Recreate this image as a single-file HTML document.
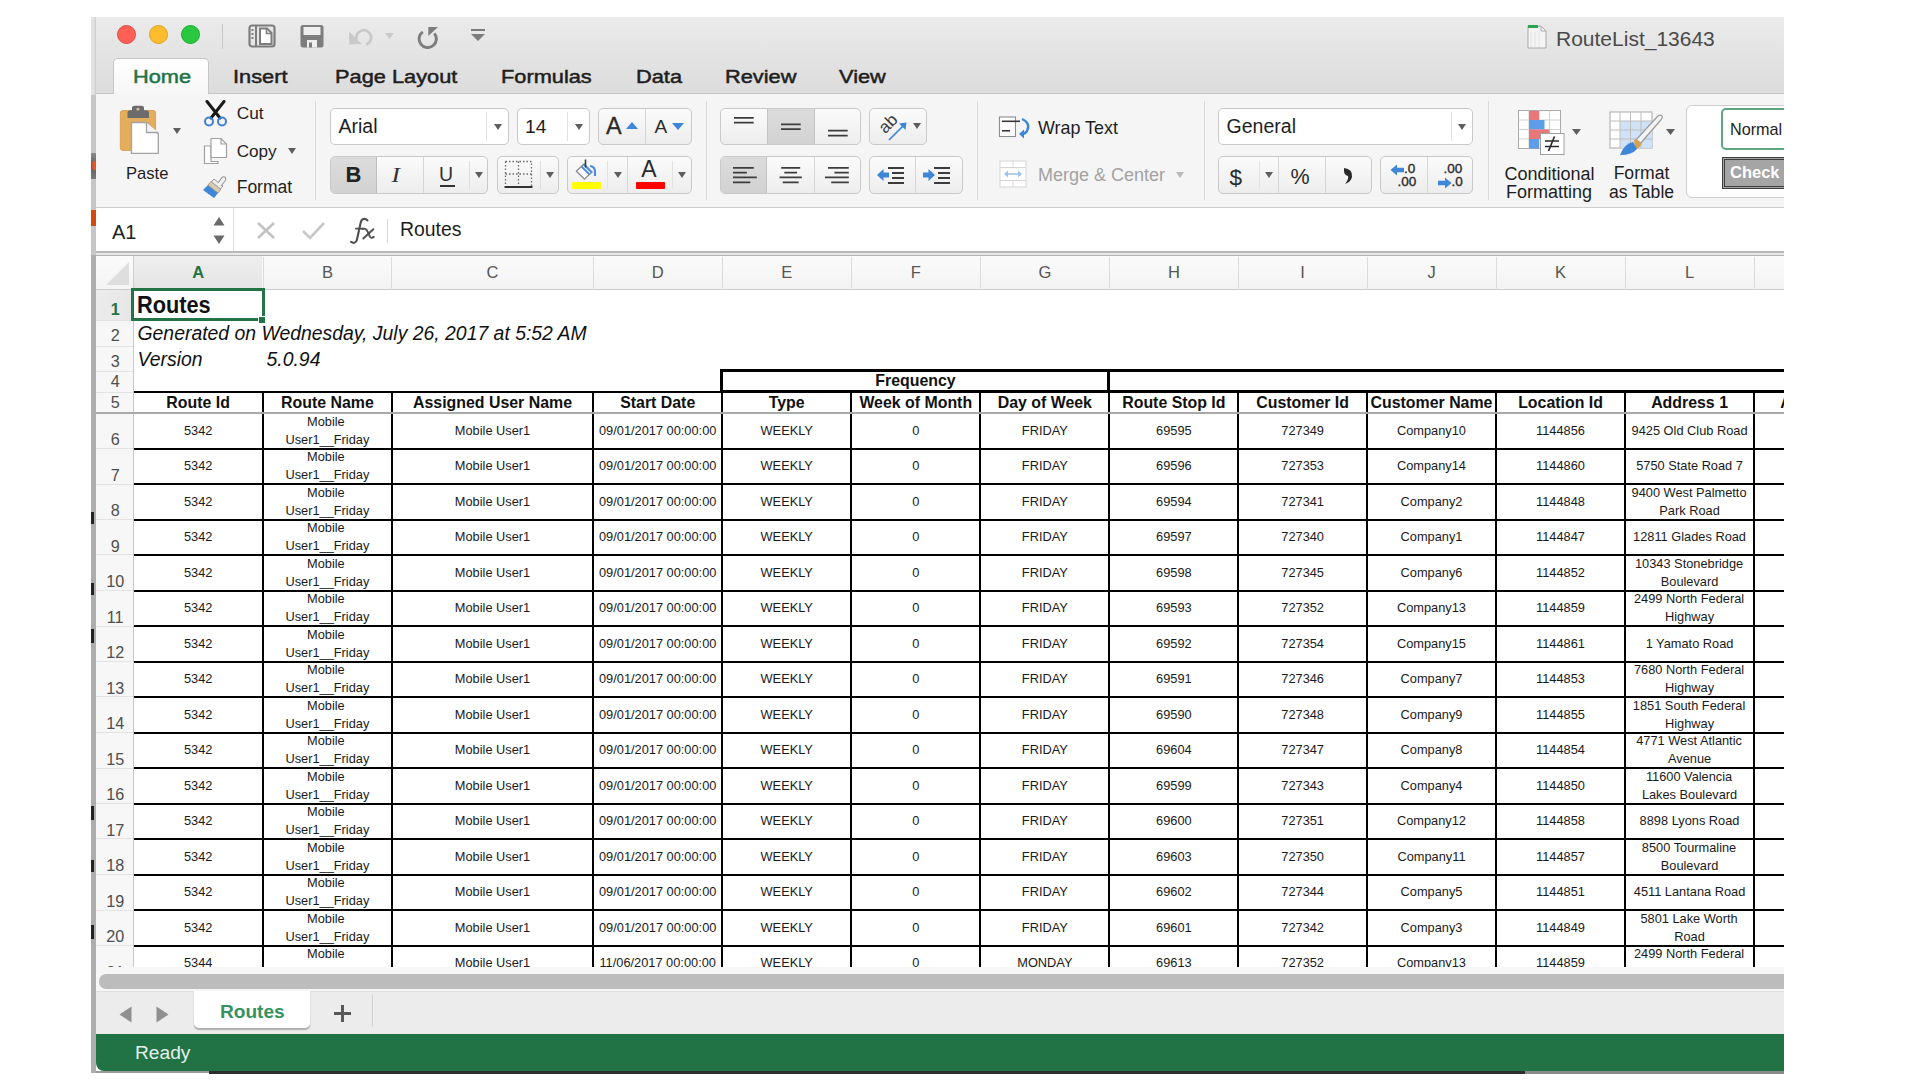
<!DOCTYPE html>
<html><head><meta charset="utf-8"><style>
*{margin:0;padding:0;box-sizing:border-box}
html,body{width:1920px;height:1080px;overflow:hidden;background:#fff;font-family:"Liberation Sans",sans-serif;position:relative}
.grp{position:absolute;border:1px solid #c9c9c9;border-radius:5px;background:linear-gradient(#fbfbfb,#ededed)}
.inp{position:absolute;border:1px solid #c9c9c9;border-radius:5px;background:#fff}
.vd{position:absolute;width:1px;background:#d4d4d4}
</style></head><body>

<div style="position:absolute;left:91px;top:17px;width:5px;height:1056px;background:#adadad"></div>
<div style="position:absolute;left:91px;top:17px;width:5px;height:78px;background:linear-gradient(90deg,#e2e2e2 60%,#c9c9c9)"></div>
<div style="position:absolute;left:91px;top:95px;width:5px;height:160px;background:#c6c6c6"></div>
<div style="position:absolute;left:91px;top:153px;width:5px;height:26px;background:linear-gradient(#8a8a8a,#5e5e5e 50%,#7a7a7a)"></div>
<div style="position:absolute;left:92px;top:161px;width:4px;height:9px;background:#e0572a;border-radius:50% 0 0 50%"></div>
<div style="position:absolute;left:91px;top:210px;width:5px;height:16px;background:#d24a12"></div>
<div style="position:absolute;left:91px;top:512px;width:3px;height:12px;background:#222"></div>
<div style="position:absolute;left:91px;top:583px;width:3px;height:12px;background:#222"></div>
<div style="position:absolute;left:91px;top:629px;width:3px;height:14px;background:#222"></div>
<div style="position:absolute;left:91px;top:806px;width:3px;height:14px;background:#222"></div>
<div style="position:absolute;left:91px;top:860px;width:3px;height:12px;background:#222"></div>
<div style="position:absolute;left:91px;top:925px;width:3px;height:14px;background:#222"></div>
<div style="position:absolute;left:96px;top:17px;width:1688px;height:77px;background:linear-gradient(#ebebeb,#e4e4e4 45%,#dcdcdc)"></div>
<div style="position:absolute;left:96px;top:93px;width:1688px;height:1px;background:#c4c4c4"></div>
<div style="position:absolute;left:116.9px;top:25px;width:19px;height:19px;border-radius:50%;background:#fe5f57;border:0.5px solid #e2463f"></div>
<div style="position:absolute;left:149.0px;top:25px;width:19px;height:19px;border-radius:50%;background:#febc2e;border:0.5px solid #e1a116"></div>
<div style="position:absolute;left:181.3px;top:25px;width:19px;height:19px;border-radius:50%;background:#28c840;border:0.5px solid #1aab29"></div>
<div style="position:absolute;left:222px;top:24px;width:1px;height:25px;background:#c8c8c8"></div>
<svg style="position:absolute;left:248px;top:24px;" width="28" height="24" viewBox="0 0 28 24"><rect x="1.5" y="1.5" width="25" height="21" rx="2.5" fill="none" stroke="#7d7d7d" stroke-width="2.2"/><rect x="7" y="1.5" width="2" height="21" fill="#7d7d7d"/><rect x="3.5" y="5" width="2" height="2" fill="#7d7d7d"/><rect x="3.5" y="9" width="2" height="2" fill="#7d7d7d"/><rect x="3.5" y="13" width="2" height="2" fill="#7d7d7d"/><path d="M12 4.5H19L23.5 9V20H12Z" fill="#fff" stroke="#7d7d7d" stroke-width="2"/><path d="M18.5 4.5V9.5H23.5" fill="none" stroke="#7d7d7d" stroke-width="1.6"/></svg>
<svg style="position:absolute;left:300px;top:24px;" width="24" height="24" viewBox="0 0 24 24"><rect x="0.5" y="1" width="23" height="22.5" rx="2.5" fill="#7d7d7d"/><rect x="3.5" y="3" width="17" height="8" fill="#efefef"/><rect x="7" y="16" width="10" height="7.5" fill="#efefef"/><rect x="9" y="18.5" width="3" height="5" fill="#7d7d7d"/></svg>
<svg style="position:absolute;left:348px;top:27px;" width="27" height="20" viewBox="0 0 27 20"><path d="M8.5 12.3 A7.4 7.4 0 1 1 18.2 17.6" fill="none" stroke="#c9c9c9" stroke-width="2.8"/><path d="M1.2 4.5 L1.2 17.6 L13.8 17 Z" fill="#c9c9c9"/></svg>
<svg style="position:absolute;left:385px;top:33px;" width="9" height="6" viewBox="0 0 9 6"><path d="M0 0H9L4.5 6Z" fill="#c9c9c9"/></svg>
<svg style="position:absolute;left:416px;top:25px;" width="24" height="24" viewBox="0 0 24 24"><path d="M6.8 6.9 A8.6 8.6 0 1 0 18.3 8.4" fill="none" stroke="#7d7d7d" stroke-width="2.9"/><path d="M12.3 1.9 H22 L12.3 11 Z" fill="#7d7d7d"/></svg>
<svg style="position:absolute;left:470px;top:28px;" width="16" height="14" viewBox="0 0 16 14"><rect x="1" y="1" width="14" height="2" fill="#7d7d7d"/><path d="M1 6H15L8 13Z" fill="#7d7d7d"/></svg>
<svg style="position:absolute;left:1526px;top:23px;" width="22" height="27" viewBox="0 0 22 27"><path d="M2 3H15L20 8V25H2Z" fill="#f4f4f4" stroke="#a9a9a9" stroke-width="1"/><path d="M15 3V8H20" fill="none" stroke="#a9a9a9"/><rect x="2" y="2" width="10" height="3" fill="#2ea44f"/><path d="M5 9V24M9 9V24M13 9V24" stroke="#e2e2e2" stroke-width="1"/></svg>
<div style="position:absolute;left:1556px;top:27.29px;font-size:21px;line-height:23.457px;color:#4a4a4a;font-weight:normal;white-space:nowrap;">RouteList_13643</div>
<div style="position:absolute;left:113px;top:58px;width:96px;height:37px;background:linear-gradient(#ffffff,#f6f6f6);border:1px solid #c6c6c6;border-bottom:none;border-radius:5px 5px 0 0"></div>
<div style="position:absolute;left:132.5px;top:65.72px;font-size:19.2px;line-height:21.446px;color:#217346;font-weight:normal;white-space:nowrap;-webkit-text-stroke:0.5px #217346;transform:scaleX(1.135);transform-origin:0 0">Home</div>
<div style="position:absolute;left:233px;top:65.72px;font-size:19.2px;line-height:21.446px;color:#1e1e1e;font-weight:normal;white-space:nowrap;-webkit-text-stroke:0.5px #1e1e1e;transform:scaleX(1.135);transform-origin:0 0">Insert</div>
<div style="position:absolute;left:335px;top:65.72px;font-size:19.2px;line-height:21.446px;color:#1e1e1e;font-weight:normal;white-space:nowrap;-webkit-text-stroke:0.5px #1e1e1e;transform:scaleX(1.135);transform-origin:0 0">Page Layout</div>
<div style="position:absolute;left:501px;top:65.72px;font-size:19.2px;line-height:21.446px;color:#1e1e1e;font-weight:normal;white-space:nowrap;-webkit-text-stroke:0.5px #1e1e1e;transform:scaleX(1.135);transform-origin:0 0">Formulas</div>
<div style="position:absolute;left:636px;top:65.72px;font-size:19.2px;line-height:21.446px;color:#1e1e1e;font-weight:normal;white-space:nowrap;-webkit-text-stroke:0.5px #1e1e1e;transform:scaleX(1.135);transform-origin:0 0">Data</div>
<div style="position:absolute;left:725px;top:65.72px;font-size:19.2px;line-height:21.446px;color:#1e1e1e;font-weight:normal;white-space:nowrap;-webkit-text-stroke:0.5px #1e1e1e;transform:scaleX(1.135);transform-origin:0 0">Review</div>
<div style="position:absolute;left:839px;top:65.72px;font-size:19.2px;line-height:21.446px;color:#1e1e1e;font-weight:normal;white-space:nowrap;-webkit-text-stroke:0.5px #1e1e1e;transform:scaleX(1.135);transform-origin:0 0">View</div>
<div style="position:absolute;left:96px;top:94px;width:1688px;height:114px;background:#f5f5f5"></div>
<div style="position:absolute;left:114px;top:93px;width:94px;height:2px;background:#f7f7f7"></div>
<div style="position:absolute;left:96px;top:207px;width:1688px;height:1px;background:#cdcdcd"></div>
<svg style="position:absolute;left:118px;top:104px;" width="42" height="52" viewBox="0 0 42 52"><rect x="2.3" y="6.5" width="35.3" height="40" rx="2.5" fill="#e4ad5c"/><rect x="2.3" y="6.5" width="35.3" height="40" rx="2.5" fill="none" stroke="#d39b48" stroke-width="0.8"/><path d="M9.5 14 V9 Q9.5 6.3 12.5 6.3 H14 V4 Q14 1.8 17 1.8 H23 Q26 1.8 26 4 V6.3 H28 Q31 6.3 31 9 V14 Z" fill="#6b6b6b"/><rect x="18.5" y="4" width="3" height="2.5" fill="#c9b89a"/><path d="M13.5 18.5 H28.5 L40.3 30 V49.3 H13.5 Z" fill="#fff" stroke="#a3a3a3" stroke-width="1.3"/><path d="M28.5 18.5 V28.5 H40.3" fill="#f4f4f4" stroke="#a3a3a3" stroke-width="1.3"/></svg>
<svg style="position:absolute;left:173px;top:128px;" width="8" height="6" viewBox="0 0 8 6"><path d="M0 0H8L4.0 6Z" fill="#5e5e5e"/></svg>
<div style="position:absolute;left:126px;top:165.18px;font-size:16.6px;line-height:18.542px;color:#1e1e1e;font-weight:normal;white-space:nowrap;">Paste</div>
<svg style="position:absolute;left:202px;top:100px;" width="27" height="28" viewBox="0 0 27 28"><path d="M5 1.5 L18 18 M22 1.5 L9 18" stroke="#1a1a1a" stroke-width="3" stroke-linecap="round"/><circle cx="7" cy="21.5" r="4" fill="none" stroke="#3f7fd6" stroke-width="2"/><circle cx="20" cy="21.5" r="4" fill="none" stroke="#3f7fd6" stroke-width="2"/></svg>
<div style="position:absolute;left:236.7px;top:103.64px;font-size:17.3px;line-height:19.324px;color:#1e1e1e;font-weight:normal;white-space:nowrap;">Cut</div>
<svg style="position:absolute;left:203px;top:137px;" width="26" height="28" viewBox="0 0 26 28"><path d="M1.5 9 H8 V24.5 H15 V26.5 H1.5 Z" fill="#fff" stroke="#a0a0a0" stroke-width="1.2"/><path d="M8 1.5 H18 L23.5 7 V20.5 H8 Z" fill="#fff" stroke="#a0a0a0" stroke-width="1.2"/><path d="M18 1.5 V7 H23.5" fill="none" stroke="#a0a0a0" stroke-width="1.2"/><rect x="8" y="9" width="0.1" height="0.1"/></svg>
<div style="position:absolute;left:236.7px;top:141.52px;font-size:17.1px;line-height:19.101px;color:#1e1e1e;font-weight:normal;white-space:nowrap;">Copy</div>
<svg style="position:absolute;left:288px;top:148px;" width="8" height="6" viewBox="0 0 8 6"><path d="M0 0H8L4.0 6Z" fill="#5e5e5e"/></svg>
<svg style="position:absolute;left:200px;top:175px;" width="30" height="26" viewBox="0 0 30 26"><path d="M3 15 L14 23 L18 18 L8 10 Z" fill="#3d86d8"/><path d="M8 10 L18 18 L21 14 L11 6.5 Z" fill="#d9cbb3" stroke="#9c8d76" stroke-width="0.8"/><path d="M11.5 7 L20.5 14 L23 11 L14 4 Z" fill="#eee" stroke="#999" stroke-width="1"/><path d="M18 8 L22 2.5 Q24 1 25.5 2.5 Q26.5 4 25 6 L21 11" fill="#f2f2f2" stroke="#999" stroke-width="1.1"/></svg>
<div style="position:absolute;left:236.7px;top:178.36px;font-size:17.5px;line-height:19.547px;color:#1e1e1e;font-weight:normal;white-space:nowrap;">Format</div>
<div style="position:absolute;left:315px;top:101px;width:1px;height:99px;background:#dadada"></div>
<div class="inp" style="left:330px;top:108px;width:179px;height:37px"></div>
<div style="position:absolute;left:486px;top:112px;width:1px;height:29px;background:#e2e2e2"></div>
<svg style="position:absolute;left:494px;top:123.5px;" width="8" height="6" viewBox="0 0 8 6"><path d="M0 0H8L4.0 6Z" fill="#5e5e5e"/></svg>
<div style="position:absolute;left:338.5px;top:115.95px;font-size:19.5px;line-height:21.782px;color:#1e1e1e;font-weight:normal;white-space:nowrap;">Arial</div>
<div class="inp" style="left:517px;top:108px;width:73px;height:37px"></div>
<div style="position:absolute;left:567px;top:112px;width:1px;height:29px;background:#e2e2e2"></div>
<svg style="position:absolute;left:575px;top:123.5px;" width="8" height="6" viewBox="0 0 8 6"><path d="M0 0H8L4.0 6Z" fill="#5e5e5e"/></svg>
<div style="position:absolute;left:525px;top:116.22px;font-size:19.2px;line-height:21.446px;color:#1e1e1e;font-weight:normal;white-space:nowrap;">14</div>
<div class="grp" style="left:598px;top:108px;width:94px;height:37px"></div>
<div style="position:absolute;left:645px;top:109px;width:1px;height:35px;background:#d6d6d6"></div>
<div style="position:absolute;left:606px;top:113.33px;font-size:23.5px;line-height:26.250px;color:#2b2b2b;font-weight:normal;white-space:nowrap;-webkit-text-stroke:0.3px #2b2b2b">A</div>
<svg style="position:absolute;left:626px;top:121.5px;" width="12" height="7" viewBox="0 0 12 7"><path d="M0 7H12L6 0Z" fill="#3d86d8"/></svg>
<div style="position:absolute;left:654.5px;top:115.61px;font-size:19px;line-height:21.223px;color:#2b2b2b;font-weight:normal;white-space:nowrap;">A</div>
<svg style="position:absolute;left:671.5px;top:123px;" width="12" height="7" viewBox="0 0 12 7"><path d="M0 0H12L6 7Z" fill="#3d86d8"/></svg>
<div class="grp" style="left:330px;top:156px;width:158px;height:38px"></div>
<div style="position:absolute;left:331px;top:157px;width:46px;height:36px;background:linear-gradient(#dcdcdc,#d2d2d2);border-radius:4px 0 0 4px;border-right:1px solid #bdbdbd"></div>
<div style="position:absolute;left:423px;top:157px;width:1px;height:36px;background:#d6d6d6"></div>
<div style="position:absolute;left:469px;top:161px;width:1px;height:28px;background:#dedede"></div>
<div style="position:absolute;left:345.5px;top:163.39px;font-size:22px;line-height:24.574px;color:#222;font-weight:bold;white-space:nowrap;">B</div>
<div style="position:absolute;left:392px;top:163.39px;font-size:22px;line-height:24.574px;color:#333;font-weight:normal;white-space:nowrap;font-family:'Liberation Serif',serif;font-style:italic;transform:scaleX(1.15)">I</div>
<div style="position:absolute;left:439px;top:163.85px;font-size:19.5px;line-height:21.782px;color:#333;font-weight:normal;white-space:nowrap;">U</div>
<div style="position:absolute;left:439.5px;top:184.5px;width:15.5px;height:2px;background:#333"></div>
<svg style="position:absolute;left:475px;top:172px;" width="8" height="6" viewBox="0 0 8 6"><path d="M0 0H8L4.0 6Z" fill="#5e5e5e"/></svg>
<div class="grp" style="left:497px;top:156px;width:62px;height:38px"></div>
<div style="position:absolute;left:540px;top:161px;width:1px;height:28px;background:#dedede"></div>
<svg style="position:absolute;left:504px;top:160px;" width="30" height="30" viewBox="0 0 30 30"><path d="M1.5 1.5H27.5V26M1.5 1.5V26M14.5 1.5V26M1.5 14H27.5" fill="none" stroke="#6a6a6a" stroke-width="1.3" stroke-dasharray="1.5 2"/><rect x="0.5" y="26" width="28" height="2" fill="#333"/></svg>
<svg style="position:absolute;left:546px;top:172px;" width="8" height="6" viewBox="0 0 8 6"><path d="M0 0H8L4.0 6Z" fill="#5e5e5e"/></svg>
<div class="grp" style="left:567px;top:156px;width:125px;height:38px"></div>
<div style="position:absolute;left:607px;top:161px;width:1px;height:28px;background:#e2e2e2"></div>
<div style="position:absolute;left:627px;top:157px;width:1px;height:36px;background:#d6d6d6"></div>
<div style="position:absolute;left:672px;top:161px;width:1px;height:28px;background:#e2e2e2"></div>
<svg style="position:absolute;left:574px;top:157px;" width="26" height="25" viewBox="0 0 26 25"><path d="M2.4 14.2 L10.1 6.9 L18.1 14.9 L10.4 22.2 Z" fill="#fff" stroke="#8a8a8a" stroke-width="1.3"/><path d="M7.5 9.5 L15.5 17.5 M9.6 7.4 L17.4 15.3" stroke="#4a8fde" stroke-width="1.8"/><path d="M11.5 2.5 V10.5" stroke="#3a3a3a" stroke-width="1.6"/><path d="M16 9 Q21 9.5 21 15 V19" fill="none" stroke="#4a8fde" stroke-width="2.2"/></svg>
<div style="position:absolute;left:571.5px;top:182px;width:29px;height:7px;background:#ffff00;border-radius:1px"></div>
<svg style="position:absolute;left:613.5px;top:172px;" width="8" height="6" viewBox="0 0 8 6"><path d="M0 0H8L4.0 6Z" fill="#5e5e5e"/></svg>
<div style="position:absolute;left:641.3px;top:157.38px;font-size:23px;line-height:25.691px;color:#2b2b2b;font-weight:normal;white-space:nowrap;">A</div>
<div style="position:absolute;left:636px;top:182px;width:29px;height:7px;background:#ff0000;border-radius:1px"></div>
<svg style="position:absolute;left:677.5px;top:172px;" width="8" height="6" viewBox="0 0 8 6"><path d="M0 0H8L4.0 6Z" fill="#5e5e5e"/></svg>
<div style="position:absolute;left:706px;top:101px;width:1px;height:99px;background:#dadada"></div>
<div class="grp" style="left:720px;top:108px;width:141px;height:37px"></div>
<div style="position:absolute;left:767px;top:109px;width:48px;height:35px;background:linear-gradient(#dcdcdc,#d2d2d2);border-left:1px solid #c4c4c4;border-right:1px solid #c4c4c4"></div>
<svg style="position:absolute;left:715px;top:100px;z-index:2" width="160" height="100" viewBox="0 0 160 100"><path d="M19 17.90h19.7M19 22.70h19.7M66 24.30h19.7M66 29.20h19.7M113 30.60h19.7M113 35.60h19.7" stroke="#3c3c3c" stroke-width="1.75"/></svg>
<div class="grp" style="left:869px;top:108px;width:58px;height:37px"></div>
<svg style="position:absolute;left:874px;top:110px;" width="40" height="34" viewBox="0 0 40 34"><text x="0" y="5" text-anchor="middle" font-family="Liberation Sans" font-size="17" fill="#3a3a3a" transform="translate(14.5 14) rotate(-45)">ab</text><path d="M15 30 L29 16" stroke="#3d86d8" stroke-width="1.7"/><path d="M25 13.5 L32.5 12.5 L31.5 20 Z" fill="#3d86d8"/></svg>
<svg style="position:absolute;left:913px;top:123px;" width="8" height="6" viewBox="0 0 8 6"><path d="M0 0H8L4.0 6Z" fill="#5e5e5e"/></svg>
<div class="grp" style="left:720px;top:156px;width:141px;height:38px"></div>
<div style="position:absolute;left:721px;top:157px;width:46px;height:36px;background:linear-gradient(#dcdcdc,#d2d2d2);border-radius:4px 0 0 4px;border-right:1px solid #c4c4c4"></div>
<div style="position:absolute;left:814px;top:157px;width:1px;height:36px;background:#d6d6d6"></div>
<svg style="position:absolute;left:715px;top:100px;z-index:2" width="160" height="100" viewBox="0 0 160 100"><path d="M18 67.90h20.8M66.20 67.90h19M113.00 67.90h20.8M18 72.70h13.9M69.35 72.70h12.7M119.40 72.70h14.4M18 77.30h23.8M64.55 77.30h22.3M110.00 77.30h23.8M18 82.40h17.3M67.75 82.40h15.9M116.20 82.40h17.6" stroke="#3c3c3c" stroke-width="1.75"/></svg>
<div class="grp" style="left:869px;top:156px;width:94px;height:38px"></div>
<div style="position:absolute;left:915px;top:157px;width:1px;height:36px;background:#d6d6d6"></div>
<svg style="position:absolute;left:877px;top:166px;" width="40" height="22" viewBox="0 0 40 22"><g transform="translate(0 2)"><path d="M0 7 L6.5 1 V4.5 H12 V9.5 H6.5 V13 Z" fill="#3d86d8"/></g><rect x="11" y="1" width="16" height="2" fill="#3c3c3c"/><rect x="15" y="6" width="12" height="2" fill="#3c3c3c"/><rect x="15" y="11" width="12" height="2" fill="#3c3c3c"/><rect x="11" y="16" width="16" height="2" fill="#3c3c3c"/></svg>
<svg style="position:absolute;left:923px;top:166px;" width="40" height="22" viewBox="0 0 40 22"><g transform="translate(0 2)"><path d="M12 7 L5.5 1 V4.5 H0 V9.5 H5.5 V13 Z" fill="#3d86d8"/></g><rect x="11" y="1" width="16" height="2" fill="#3c3c3c"/><rect x="15" y="6" width="12" height="2" fill="#3c3c3c"/><rect x="15" y="11" width="12" height="2" fill="#3c3c3c"/><rect x="11" y="16" width="16" height="2" fill="#3c3c3c"/></svg>
<div style="position:absolute;left:977px;top:101px;width:1px;height:99px;background:#dadada"></div>
<svg style="position:absolute;left:998px;top:115px;" width="36" height="25" viewBox="0 0 36 25"><rect x="1.5" y="2" width="16" height="19.5" fill="#fff" stroke="#8c8c8c" stroke-width="1.1"/><rect x="4" y="5.5" width="18" height="1.6" fill="#3a3a3a"/><rect x="4" y="15" width="8" height="1.6" fill="#3a3a3a"/><path d="M24 4 Q33 8 29 16 Q27 19 24 19" fill="none" stroke="#3d86d8" stroke-width="2.4"/><path d="M21 19 L26 14.5 V23.5 Z" fill="#3d86d8"/></svg>
<div style="position:absolute;left:1038px;top:117.60px;font-size:17.9px;line-height:19.994px;color:#1e1e1e;font-weight:normal;white-space:nowrap;">Wrap Text</div>
<svg style="position:absolute;left:999px;top:160px;" width="30" height="29" viewBox="0 0 30 29"><rect x="1" y="1" width="26" height="26" fill="#fff" stroke="#d5d5d5" stroke-width="1"/><path d="M1 7.5H27M1 20.5H27M14 1V7.5M14 20.5V27" stroke="#d5d5d5" stroke-width="1"/><path d="M6 14H22" stroke="#9fc1ea" stroke-width="1.6"/><path d="M5 14L9 10.5V17.5Z M23 14L19 10.5V17.5Z" fill="#9fc1ea"/></svg>
<div style="position:absolute;left:1038px;top:165.01px;font-size:18px;line-height:20.106px;color:#a2a2a2;font-weight:normal;white-space:nowrap;">Merge &amp; Center</div>
<svg style="position:absolute;left:1176px;top:172px;" width="8" height="6" viewBox="0 0 8 6"><path d="M0 0H8L4.0 6Z" fill="#b9b9b9"/></svg>
<div style="position:absolute;left:1204px;top:101px;width:1px;height:99px;background:#dadada"></div>
<div class="inp" style="left:1218px;top:108px;width:255px;height:37px"></div>
<div style="position:absolute;left:1451px;top:112px;width:1px;height:29px;background:#e2e2e2"></div>
<svg style="position:absolute;left:1458px;top:123.5px;" width="8" height="6" viewBox="0 0 8 6"><path d="M0 0H8L4.0 6Z" fill="#5e5e5e"/></svg>
<div style="position:absolute;left:1226.6px;top:116.15px;font-size:19.5px;line-height:21.782px;color:#1e1e1e;font-weight:normal;white-space:nowrap;">General</div>
<div class="grp" style="left:1218px;top:156px;width:154px;height:38px"></div>
<div style="position:absolute;left:1259px;top:161px;width:1px;height:28px;background:#e2e2e2"></div>
<div style="position:absolute;left:1278px;top:157px;width:1px;height:36px;background:#d6d6d6"></div>
<div style="position:absolute;left:1325px;top:157px;width:1px;height:36px;background:#d6d6d6"></div>
<div style="position:absolute;left:1229.5px;top:164.64px;font-size:22.5px;line-height:25.133px;color:#2b2b2b;font-weight:normal;white-space:nowrap;">$</div>
<svg style="position:absolute;left:1264.5px;top:172px;" width="8" height="6" viewBox="0 0 8 6"><path d="M0 0H8L4.0 6Z" fill="#5e5e5e"/></svg>
<div style="position:absolute;left:1290.5px;top:164.84px;font-size:21.5px;line-height:24.015px;color:#2b2b2b;font-weight:normal;white-space:nowrap;">%</div>
<svg style="position:absolute;left:1342px;top:166px;" width="14" height="20" viewBox="0 0 14 20"><path d="M2 2 Q11 3 10 11 Q9 16 3 18 Q7 13 6 10 Q2 9 2 5 Z" fill="#2b2b2b"/></svg>
<div class="grp" style="left:1380px;top:156px;width:93px;height:38px"></div>
<div style="position:absolute;left:1427px;top:157px;width:1px;height:36px;background:#d6d6d6"></div>
<svg style="position:absolute;left:1389.5px;top:163.5px;" width="15" height="12" viewBox="0 0 15 12"><path d="M0.5 6 L7 0.5 V3.8 H14 V8.2 H7 V11.5 Z" fill="#3d86d8"/></svg>
<div style="position:absolute;left:1404px;top:160.98px;font-size:13.5px;line-height:15.079px;color:#2b2b2b;font-weight:normal;white-space:nowrap;-webkit-text-stroke:0.35px #2b2b2b">.0</div>
<div style="position:absolute;left:1397.5px;top:174.48px;font-size:13.5px;line-height:15.079px;color:#2b2b2b;font-weight:normal;white-space:nowrap;-webkit-text-stroke:0.35px #2b2b2b">.00</div>
<div style="position:absolute;left:1443.5px;top:160.98px;font-size:13.5px;line-height:15.079px;color:#2b2b2b;font-weight:normal;white-space:nowrap;-webkit-text-stroke:0.35px #2b2b2b">.00</div>
<svg style="position:absolute;left:1436.5px;top:176.5px;" width="15" height="12" viewBox="0 0 15 12"><path d="M14.5 6 L8 0.5 V3.8 H1 V8.2 H8 V11.5 Z" fill="#3d86d8"/></svg>
<div style="position:absolute;left:1451.5px;top:174.48px;font-size:13.5px;line-height:15.079px;color:#2b2b2b;font-weight:normal;white-space:nowrap;-webkit-text-stroke:0.35px #2b2b2b">.0</div>
<div style="position:absolute;left:1488px;top:101px;width:1px;height:99px;background:#dadada"></div>
<svg style="position:absolute;left:1517px;top:109px;" width="54" height="48" viewBox="0 0 54 48"><rect x="1.5" y="1.5" width="42" height="38" fill="#fff" stroke="#a9a9a9" stroke-width="1"/><path d="M1.5 11H43.5M1.5 20.5H43.5M1.5 30H43.5M12 1.5V39.5M22 1.5V39.5M32.5 1.5V39.5" stroke="#d0d0d0" stroke-width="1"/><rect x="12" y="2" width="10" height="9" fill="#e8777a"/><rect x="12" y="11" width="15.5" height="9.5" fill="#5d9ee8"/><rect x="12" y="20.5" width="20.5" height="9.5" fill="#e8777a"/><rect x="12" y="30" width="10" height="9.5" fill="#5d9ee8"/><rect x="23.5" y="24.5" width="23.5" height="21" fill="#fff" stroke="#a0a0a0" stroke-width="1"/><path d="M28 32H42M28 37.5H42M37.5 27.5L31.5 42" stroke="#2b2b2b" stroke-width="1.7"/></svg>
<svg style="position:absolute;left:1572px;top:129px;" width="9" height="6" viewBox="0 0 9 6"><path d="M0 0H9L4.5 6Z" fill="#5e5e5e"/></svg>
<div style="position:absolute;left:1349.50px;width:400px;text-align:center;top:164.01px;font-size:18px;line-height:20.106px;color:#1e1e1e;font-weight:normal;white-space:nowrap;">Conditional</div>
<div style="position:absolute;left:1349.00px;width:400px;text-align:center;top:182.31px;font-size:18px;line-height:20.106px;color:#1e1e1e;font-weight:normal;white-space:nowrap;">Formatting</div>
<svg style="position:absolute;left:1609px;top:111px;" width="58" height="46" viewBox="0 0 58 46"><rect x="1" y="1" width="42" height="36" fill="#fff" stroke="#a9a9a9" stroke-width="1"/><rect x="11" y="10" width="32" height="27" fill="#cfe2f7"/><path d="M1 10H43M1 19H43M1 28H43M11 1V37M21.5 1V37M32 1V37" stroke="#bdbdbd" stroke-width="1"/><path d="M26 30 L48 6 Q51 3 53 5 Q54 7 51 10 L30 34 Z" fill="#f3f3f3" stroke="#9a9a9a" stroke-width="1.2"/><path d="M25 29 Q31 28 32 34 Q30 38 26 38 Z" fill="#d8a24c"/><path d="M24 31 Q15 33 11 44 Q23 44 28 38 Z" fill="#3d86d8"/></svg>
<svg style="position:absolute;left:1666px;top:129px;" width="9" height="6" viewBox="0 0 9 6"><path d="M0 0H9L4.5 6Z" fill="#5e5e5e"/></svg>
<div style="position:absolute;left:1441.50px;width:400px;text-align:center;top:164.37px;font-size:17.6px;line-height:19.659px;color:#1e1e1e;font-weight:normal;white-space:nowrap;">Format</div>
<div style="position:absolute;left:1441.50px;width:400px;text-align:center;top:182.67px;font-size:17.6px;line-height:19.659px;color:#1e1e1e;font-weight:normal;white-space:nowrap;">as Table</div>
<div style="position:absolute;left:1686px;top:105px;width:120px;height:93px;background:#fff;border:1px solid #cfcfcf;border-radius:6px"></div>
<div style="position:absolute;left:1721px;top:108px;width:80px;height:42px;background:#fff;border:2px solid #5ea67d;border-radius:5px"></div>
<div style="position:absolute;left:1730px;top:120.34px;font-size:16.2px;line-height:18.095px;color:#1e1e1e;font-weight:normal;white-space:nowrap;">Normal</div>
<div style="position:absolute;left:1722px;top:157px;width:80px;height:32px;background:#a5a5a5;border:3px double #3f3f3f"></div>
<div style="position:absolute;left:1730px;top:162.57px;font-size:16.5px;line-height:18.430px;color:#fff;font-weight:bold;white-space:nowrap;">Check Cell</div>
<div style="position:absolute;left:96px;top:208px;width:1688px;height:44px;background:#fff"></div>
<div style="position:absolute;left:112px;top:221.40px;font-size:20px;line-height:22.340px;color:#222;font-weight:normal;white-space:nowrap;">A1</div>
<svg style="position:absolute;left:213px;top:216px;" width="12" height="29" viewBox="0 0 12 29"><path d="M0.5 9.5H11.5L6 1Z M0.5 19.5H11.5L6 28Z" fill="#6a6a6a"/></svg>
<div style="position:absolute;left:233px;top:208px;width:1px;height:44px;background:#dcdcdc"></div>
<svg style="position:absolute;left:256px;top:221px;" width="20" height="19" viewBox="0 0 20 19"><path d="M2 2L18 17M18 2L2 17" stroke="#c3c3c3" stroke-width="2.6"/></svg>
<svg style="position:absolute;left:301px;top:221px;" width="25" height="19" viewBox="0 0 25 19"><path d="M2 10L9 17L23 2" fill="none" stroke="#c8c8c8" stroke-width="2.6"/></svg>
<svg style="position:absolute;left:348px;top:215px;" width="30" height="32" viewBox="0 0 30 32"><g fill="none" stroke="#4f4f4f" stroke-linecap="round"><path d="M19.5 5.5 C17 2.8 13.5 3.5 12.6 8 L9 24.5 C8.3 27.8 5.5 28.8 3 26.8" stroke-width="2.1"/><path d="M7.8 13.6 H15.6" stroke-width="1.7"/><path d="M14.5 14 Q18 12.5 19.8 17 L21.8 21.5 Q23.3 24 25.8 21.8" stroke-width="1.9"/><path d="M25.3 14.2 L15.3 23.5" stroke-width="1.9"/></g></svg>
<div style="position:absolute;left:386.5px;top:219px;width:1px;height:24px;background:#d8d8d8"></div>
<div style="position:absolute;left:400px;top:219.44px;font-size:19.4px;line-height:21.670px;color:#1e1e1e;font-weight:normal;white-space:nowrap;">Routes</div>
<div style="position:absolute;left:96px;top:251px;width:1688px;height:1.5px;background:#b9b9b9"></div>
<div style="position:absolute;left:96px;top:252.5px;width:1688px;height:2px;background:#e9e9e9"></div>
<div style="position:absolute;left:96px;top:254.5px;width:1688px;height:1.5px;background:#b1b1b1"></div>
<div style="position:absolute;left:96px;top:256px;width:1688px;height:34px;background:linear-gradient(#fbfbfb,#f3f3f3)"></div>
<div style="position:absolute;left:133px;top:256px;width:129px;height:34px;background:linear-gradient(#efefef,#e4e4e4)"></div>
<div style="position:absolute;left:96px;top:289px;width:1688px;height:1px;background:#cdcdcd"></div>
<svg style="position:absolute;left:97px;top:258px;" width="36" height="30" viewBox="0 0 36 30"><path d="M32 4V27H9Z" fill="#dedede"/></svg>
<div style="position:absolute;left:133px;top:256px;width:1px;height:34px;background:#cfcfcf"></div>
<div style="position:absolute;left:263px;top:257px;width:1px;height:33px;background:#dcdcdc"></div>
<div style="position:absolute;left:391px;top:257px;width:1px;height:33px;background:#dcdcdc"></div>
<div style="position:absolute;left:593px;top:257px;width:1px;height:33px;background:#dcdcdc"></div>
<div style="position:absolute;left:722px;top:257px;width:1px;height:33px;background:#dcdcdc"></div>
<div style="position:absolute;left:851px;top:257px;width:1px;height:33px;background:#dcdcdc"></div>
<div style="position:absolute;left:980px;top:257px;width:1px;height:33px;background:#dcdcdc"></div>
<div style="position:absolute;left:1109px;top:257px;width:1px;height:33px;background:#dcdcdc"></div>
<div style="position:absolute;left:1238px;top:257px;width:1px;height:33px;background:#dcdcdc"></div>
<div style="position:absolute;left:1367px;top:257px;width:1px;height:33px;background:#dcdcdc"></div>
<div style="position:absolute;left:1496px;top:257px;width:1px;height:33px;background:#dcdcdc"></div>
<div style="position:absolute;left:1625px;top:257px;width:1px;height:33px;background:#dcdcdc"></div>
<div style="position:absolute;left:1754px;top:257px;width:1px;height:33px;background:#dcdcdc"></div>
<div style="position:absolute;left:1883px;top:257px;width:1px;height:33px;background:#dcdcdc"></div>
<div style="position:absolute;left:148.15px;width:100px;text-align:center;top:263.37px;font-size:16.5px;line-height:18.430px;color:#217346;font-weight:bold;white-space:nowrap;">A</div>
<div style="position:absolute;left:277.40px;width:100px;text-align:center;top:263.37px;font-size:16.5px;line-height:18.430px;color:#555;font-weight:normal;white-space:nowrap;">B</div>
<div style="position:absolute;left:442.50px;width:100px;text-align:center;top:263.37px;font-size:16.5px;line-height:18.430px;color:#555;font-weight:normal;white-space:nowrap;">C</div>
<div style="position:absolute;left:607.70px;width:100px;text-align:center;top:263.37px;font-size:16.5px;line-height:18.430px;color:#555;font-weight:normal;white-space:nowrap;">D</div>
<div style="position:absolute;left:736.73px;width:100px;text-align:center;top:263.37px;font-size:16.5px;line-height:18.430px;color:#555;font-weight:normal;white-space:nowrap;">E</div>
<div style="position:absolute;left:865.75px;width:100px;text-align:center;top:263.37px;font-size:16.5px;line-height:18.430px;color:#555;font-weight:normal;white-space:nowrap;">F</div>
<div style="position:absolute;left:994.83px;width:100px;text-align:center;top:263.37px;font-size:16.5px;line-height:18.430px;color:#555;font-weight:normal;white-space:nowrap;">G</div>
<div style="position:absolute;left:1123.85px;width:100px;text-align:center;top:263.37px;font-size:16.5px;line-height:18.430px;color:#555;font-weight:normal;white-space:nowrap;">H</div>
<div style="position:absolute;left:1252.65px;width:100px;text-align:center;top:263.37px;font-size:16.5px;line-height:18.430px;color:#555;font-weight:normal;white-space:nowrap;">I</div>
<div style="position:absolute;left:1381.50px;width:100px;text-align:center;top:263.37px;font-size:16.5px;line-height:18.430px;color:#555;font-weight:normal;white-space:nowrap;">J</div>
<div style="position:absolute;left:1510.50px;width:100px;text-align:center;top:263.37px;font-size:16.5px;line-height:18.430px;color:#555;font-weight:normal;white-space:nowrap;">K</div>
<div style="position:absolute;left:1639.55px;width:100px;text-align:center;top:263.37px;font-size:16.5px;line-height:18.430px;color:#555;font-weight:normal;white-space:nowrap;">L</div>
<div style="position:absolute;left:1768.55px;width:100px;text-align:center;top:263.37px;font-size:16.5px;line-height:18.430px;color:#555;font-weight:normal;white-space:nowrap;">M</div>
<div style="position:absolute;left:96px;top:290px;width:37px;height:678px;background:#f7f7f7"></div>
<div style="position:absolute;left:96px;top:290px;width:37px;height:30px;background:linear-gradient(90deg,#ececec,#e6e6e6)"></div>
<div style="position:absolute;left:133px;top:290px;width:1px;height:678px;background:#c9c9c9"></div>
<div style="position:absolute;left:96px;top:320px;width:37px;height:1px;background:#e3e3e3"></div>
<div style="position:absolute;left:95.20px;width:40px;text-align:center;top:300.34px;font-size:16.2px;line-height:18.095px;color:#217346;font-weight:bold;white-space:nowrap;">1</div>
<div style="position:absolute;left:96px;top:346px;width:37px;height:1px;background:#e3e3e3"></div>
<div style="position:absolute;left:95.20px;width:40px;text-align:center;top:326.34px;font-size:16.2px;line-height:18.095px;color:#4f4f4f;font-weight:normal;white-space:nowrap;">2</div>
<div style="position:absolute;left:96px;top:371px;width:37px;height:1px;background:#e3e3e3"></div>
<div style="position:absolute;left:95.20px;width:40px;text-align:center;top:351.64px;font-size:16.2px;line-height:18.095px;color:#4f4f4f;font-weight:normal;white-space:nowrap;">3</div>
<div style="position:absolute;left:96px;top:392px;width:37px;height:1px;background:#e3e3e3"></div>
<div style="position:absolute;left:95.20px;width:40px;text-align:center;top:372.34px;font-size:16.2px;line-height:18.095px;color:#4f4f4f;font-weight:normal;white-space:nowrap;">4</div>
<div style="position:absolute;left:96px;top:412px;width:37px;height:1px;background:#e3e3e3"></div>
<div style="position:absolute;left:95.20px;width:40px;text-align:center;top:393.34px;font-size:16.2px;line-height:18.095px;color:#4f4f4f;font-weight:normal;white-space:nowrap;">5</div>
<div style="position:absolute;left:96px;top:448px;width:37px;height:1px;background:#e3e3e3"></div>
<div style="position:absolute;left:95.20px;width:40px;text-align:center;top:430.04px;font-size:16.2px;line-height:18.095px;color:#4f4f4f;font-weight:normal;white-space:nowrap;">6</div>
<div style="position:absolute;left:96px;top:484px;width:37px;height:1px;background:#e3e3e3"></div>
<div style="position:absolute;left:95.20px;width:40px;text-align:center;top:465.54px;font-size:16.2px;line-height:18.095px;color:#4f4f4f;font-weight:normal;white-space:nowrap;">7</div>
<div style="position:absolute;left:96px;top:519px;width:37px;height:1px;background:#e3e3e3"></div>
<div style="position:absolute;left:95.20px;width:40px;text-align:center;top:501.04px;font-size:16.2px;line-height:18.095px;color:#4f4f4f;font-weight:normal;white-space:nowrap;">8</div>
<div style="position:absolute;left:96px;top:554px;width:37px;height:1px;background:#e3e3e3"></div>
<div style="position:absolute;left:95.20px;width:40px;text-align:center;top:536.54px;font-size:16.2px;line-height:18.095px;color:#4f4f4f;font-weight:normal;white-space:nowrap;">9</div>
<div style="position:absolute;left:96px;top:590px;width:37px;height:1px;background:#e3e3e3"></div>
<div style="position:absolute;left:95.20px;width:40px;text-align:center;top:572.04px;font-size:16.2px;line-height:18.095px;color:#4f4f4f;font-weight:normal;white-space:nowrap;">10</div>
<div style="position:absolute;left:96px;top:626px;width:37px;height:1px;background:#e3e3e3"></div>
<div style="position:absolute;left:95.20px;width:40px;text-align:center;top:607.54px;font-size:16.2px;line-height:18.095px;color:#4f4f4f;font-weight:normal;white-space:nowrap;">11</div>
<div style="position:absolute;left:96px;top:661px;width:37px;height:1px;background:#e3e3e3"></div>
<div style="position:absolute;left:95.20px;width:40px;text-align:center;top:643.04px;font-size:16.2px;line-height:18.095px;color:#4f4f4f;font-weight:normal;white-space:nowrap;">12</div>
<div style="position:absolute;left:96px;top:696px;width:37px;height:1px;background:#e3e3e3"></div>
<div style="position:absolute;left:95.20px;width:40px;text-align:center;top:678.54px;font-size:16.2px;line-height:18.095px;color:#4f4f4f;font-weight:normal;white-space:nowrap;">13</div>
<div style="position:absolute;left:96px;top:732px;width:37px;height:1px;background:#e3e3e3"></div>
<div style="position:absolute;left:95.20px;width:40px;text-align:center;top:714.04px;font-size:16.2px;line-height:18.095px;color:#4f4f4f;font-weight:normal;white-space:nowrap;">14</div>
<div style="position:absolute;left:96px;top:768px;width:37px;height:1px;background:#e3e3e3"></div>
<div style="position:absolute;left:95.20px;width:40px;text-align:center;top:749.54px;font-size:16.2px;line-height:18.095px;color:#4f4f4f;font-weight:normal;white-space:nowrap;">15</div>
<div style="position:absolute;left:96px;top:803px;width:37px;height:1px;background:#e3e3e3"></div>
<div style="position:absolute;left:95.20px;width:40px;text-align:center;top:785.04px;font-size:16.2px;line-height:18.095px;color:#4f4f4f;font-weight:normal;white-space:nowrap;">16</div>
<div style="position:absolute;left:96px;top:838px;width:37px;height:1px;background:#e3e3e3"></div>
<div style="position:absolute;left:95.20px;width:40px;text-align:center;top:820.54px;font-size:16.2px;line-height:18.095px;color:#4f4f4f;font-weight:normal;white-space:nowrap;">17</div>
<div style="position:absolute;left:96px;top:874px;width:37px;height:1px;background:#e3e3e3"></div>
<div style="position:absolute;left:95.20px;width:40px;text-align:center;top:856.04px;font-size:16.2px;line-height:18.095px;color:#4f4f4f;font-weight:normal;white-space:nowrap;">18</div>
<div style="position:absolute;left:96px;top:910px;width:37px;height:1px;background:#e3e3e3"></div>
<div style="position:absolute;left:95.20px;width:40px;text-align:center;top:891.54px;font-size:16.2px;line-height:18.095px;color:#4f4f4f;font-weight:normal;white-space:nowrap;">19</div>
<div style="position:absolute;left:96px;top:945px;width:37px;height:1px;background:#e3e3e3"></div>
<div style="position:absolute;left:95.20px;width:40px;text-align:center;top:927.04px;font-size:16.2px;line-height:18.095px;color:#4f4f4f;font-weight:normal;white-space:nowrap;">20</div>
<div style="position:absolute;left:95.20px;width:40px;text-align:center;top:962.54px;font-size:16.2px;line-height:18.095px;color:#4f4f4f;font-weight:normal;white-space:nowrap;">21</div>
<div style="position:absolute;left:134px;top:290px;width:1650px;height:678px;background:#fff"></div>
<div style="position:absolute;left:137px;top:290px;width:2px;height:2px;"></div>
<div style="position:absolute;left:137.3px;top:293.38px;font-size:23px;line-height:25.691px;color:#111;font-weight:bold;white-space:nowrap;transform:scaleX(0.945);transform-origin:0 0">Routes</div>
<div style="position:absolute;left:137.5px;top:322.64px;font-size:19.4px;line-height:21.670px;color:#111;font-weight:normal;white-space:nowrap;font-style:italic">Generated on Wednesday, July 26, 2017 at 5:52 AM</div>
<div style="position:absolute;left:137.5px;top:348.84px;font-size:19.4px;line-height:21.670px;color:#111;font-weight:normal;white-space:nowrap;font-style:italic">Version</div>
<div style="position:absolute;left:266.5px;top:348.84px;font-size:19.4px;line-height:21.670px;color:#111;font-weight:normal;white-space:nowrap;font-style:italic">5.0.94</div>
<div style="position:absolute;left:720px;top:369px;width:1064px;height:3px;background:#000"></div>
<div style="position:absolute;left:720px;top:369px;width:3px;height:24px;background:#000"></div>
<div style="position:absolute;left:1107px;top:369px;width:3px;height:24px;background:#000"></div>
<div style="position:absolute;left:720px;top:390px;width:1064px;height:3px;background:#000"></div>
<div style="position:absolute;left:134px;top:391px;width:586px;height:2px;background:#000"></div>
<div style="position:absolute;left:815.50px;width:200px;text-align:center;top:371.91px;font-size:15.9px;line-height:17.760px;color:#111;font-weight:bold;white-space:nowrap;">Frequency</div>
<div style="position:absolute;left:96px;top:412px;width:1688px;height:2px;background:#a9a9a9"></div>
<div style="position:absolute;left:262px;top:393px;width:2px;height:19px;background:#000"></div>
<div style="position:absolute;left:262px;top:414px;width:2px;height:560px;background:#000"></div>
<div style="position:absolute;left:391px;top:393px;width:2px;height:19px;background:#000"></div>
<div style="position:absolute;left:391px;top:414px;width:2px;height:560px;background:#000"></div>
<div style="position:absolute;left:592px;top:393px;width:2px;height:19px;background:#000"></div>
<div style="position:absolute;left:592px;top:414px;width:2px;height:560px;background:#000"></div>
<div style="position:absolute;left:721px;top:393px;width:2px;height:19px;background:#000"></div>
<div style="position:absolute;left:721px;top:414px;width:2px;height:560px;background:#000"></div>
<div style="position:absolute;left:850px;top:393px;width:2px;height:19px;background:#000"></div>
<div style="position:absolute;left:850px;top:414px;width:2px;height:560px;background:#000"></div>
<div style="position:absolute;left:979px;top:393px;width:2px;height:19px;background:#000"></div>
<div style="position:absolute;left:979px;top:414px;width:2px;height:560px;background:#000"></div>
<div style="position:absolute;left:1108px;top:393px;width:2px;height:19px;background:#000"></div>
<div style="position:absolute;left:1108px;top:414px;width:2px;height:560px;background:#000"></div>
<div style="position:absolute;left:1237px;top:393px;width:2px;height:19px;background:#000"></div>
<div style="position:absolute;left:1237px;top:414px;width:2px;height:560px;background:#000"></div>
<div style="position:absolute;left:1366px;top:393px;width:2px;height:19px;background:#000"></div>
<div style="position:absolute;left:1366px;top:414px;width:2px;height:560px;background:#000"></div>
<div style="position:absolute;left:1495px;top:393px;width:2px;height:19px;background:#000"></div>
<div style="position:absolute;left:1495px;top:414px;width:2px;height:560px;background:#000"></div>
<div style="position:absolute;left:1624px;top:393px;width:2px;height:19px;background:#000"></div>
<div style="position:absolute;left:1624px;top:414px;width:2px;height:560px;background:#000"></div>
<div style="position:absolute;left:1753px;top:393px;width:2px;height:19px;background:#000"></div>
<div style="position:absolute;left:1753px;top:414px;width:2px;height:560px;background:#000"></div>
<div style="position:absolute;left:1882px;top:393px;width:2px;height:19px;background:#000"></div>
<div style="position:absolute;left:1882px;top:414px;width:2px;height:560px;background:#000"></div>
<div style="position:absolute;left:88.15px;width:220px;text-align:center;top:394.21px;font-size:15.9px;line-height:17.760px;color:#111;font-weight:bold;white-space:nowrap;">Route Id</div>
<div style="position:absolute;left:217.40px;width:220px;text-align:center;top:394.21px;font-size:15.9px;line-height:17.760px;color:#111;font-weight:bold;white-space:nowrap;">Route Name</div>
<div style="position:absolute;left:382.50px;width:220px;text-align:center;top:394.21px;font-size:15.9px;line-height:17.760px;color:#111;font-weight:bold;white-space:nowrap;">Assigned User Name</div>
<div style="position:absolute;left:547.70px;width:220px;text-align:center;top:394.21px;font-size:15.9px;line-height:17.760px;color:#111;font-weight:bold;white-space:nowrap;">Start Date</div>
<div style="position:absolute;left:676.73px;width:220px;text-align:center;top:394.21px;font-size:15.9px;line-height:17.760px;color:#111;font-weight:bold;white-space:nowrap;">Type</div>
<div style="position:absolute;left:805.75px;width:220px;text-align:center;top:394.21px;font-size:15.9px;line-height:17.760px;color:#111;font-weight:bold;white-space:nowrap;">Week of Month</div>
<div style="position:absolute;left:934.83px;width:220px;text-align:center;top:394.21px;font-size:15.9px;line-height:17.760px;color:#111;font-weight:bold;white-space:nowrap;">Day of Week</div>
<div style="position:absolute;left:1063.85px;width:220px;text-align:center;top:394.21px;font-size:15.9px;line-height:17.760px;color:#111;font-weight:bold;white-space:nowrap;">Route Stop Id</div>
<div style="position:absolute;left:1192.65px;width:220px;text-align:center;top:394.21px;font-size:15.9px;line-height:17.760px;color:#111;font-weight:bold;white-space:nowrap;">Customer Id</div>
<div style="position:absolute;left:1321.50px;width:220px;text-align:center;top:394.21px;font-size:15.9px;line-height:17.760px;color:#111;font-weight:bold;white-space:nowrap;">Customer Name</div>
<div style="position:absolute;left:1450.50px;width:220px;text-align:center;top:394.21px;font-size:15.9px;line-height:17.760px;color:#111;font-weight:bold;white-space:nowrap;">Location Id</div>
<div style="position:absolute;left:1579.55px;width:220px;text-align:center;top:394.21px;font-size:15.9px;line-height:17.760px;color:#111;font-weight:bold;white-space:nowrap;">Address 1</div>
<div style="position:absolute;left:1708.55px;width:220px;text-align:center;top:394.21px;font-size:15.9px;line-height:17.760px;color:#111;font-weight:bold;white-space:nowrap;">Address 2</div>
<div style="position:absolute;left:134px;top:448px;width:1650px;height:2px;background:#000"></div>
<div style="position:absolute;left:134.15px;width:128px;text-align:center;top:423.77px;font-size:12.8px;line-height:14.298px;color:#1a1a1a;font-weight:normal;white-space:nowrap;">5342</div>
<div style="position:absolute;left:261.90px;width:128px;text-align:center;top:414.87px;font-size:12.8px;line-height:14.298px;color:#1a1a1a;font-weight:normal;white-space:nowrap;">Mobile</div>
<div style="position:absolute;left:263.40px;width:128px;text-align:center;top:432.67px;font-size:12.8px;line-height:14.298px;color:#1a1a1a;font-weight:normal;white-space:nowrap;">User1__Friday</div>
<div style="position:absolute;left:428.50px;width:128px;text-align:center;top:423.77px;font-size:12.8px;line-height:14.298px;color:#1a1a1a;font-weight:normal;white-space:nowrap;">Mobile User1</div>
<div style="position:absolute;left:593.70px;width:128px;text-align:center;top:423.77px;font-size:12.8px;line-height:14.298px;color:#1a1a1a;font-weight:normal;white-space:nowrap;">09/01/2017 00:00:00</div>
<div style="position:absolute;left:722.73px;width:128px;text-align:center;top:423.77px;font-size:12.8px;line-height:14.298px;color:#1a1a1a;font-weight:normal;white-space:nowrap;">WEEKLY</div>
<div style="position:absolute;left:851.75px;width:128px;text-align:center;top:423.77px;font-size:12.8px;line-height:14.298px;color:#1a1a1a;font-weight:normal;white-space:nowrap;">0</div>
<div style="position:absolute;left:980.83px;width:128px;text-align:center;top:423.77px;font-size:12.8px;line-height:14.298px;color:#1a1a1a;font-weight:normal;white-space:nowrap;">FRIDAY</div>
<div style="position:absolute;left:1109.85px;width:128px;text-align:center;top:423.77px;font-size:12.8px;line-height:14.298px;color:#1a1a1a;font-weight:normal;white-space:nowrap;">69595</div>
<div style="position:absolute;left:1238.65px;width:128px;text-align:center;top:423.77px;font-size:12.8px;line-height:14.298px;color:#1a1a1a;font-weight:normal;white-space:nowrap;">727349</div>
<div style="position:absolute;left:1367.50px;width:128px;text-align:center;top:423.77px;font-size:12.8px;line-height:14.298px;color:#1a1a1a;font-weight:normal;white-space:nowrap;">Company10</div>
<div style="position:absolute;left:1496.50px;width:128px;text-align:center;top:423.77px;font-size:12.8px;line-height:14.298px;color:#1a1a1a;font-weight:normal;white-space:nowrap;">1144856</div>
<div style="position:absolute;left:1625.55px;width:128px;text-align:center;top:423.77px;font-size:12.8px;line-height:14.298px;color:#1a1a1a;font-weight:normal;white-space:nowrap;">9425 Old Club Road</div>
<div style="position:absolute;left:134px;top:483px;width:1650px;height:2px;background:#000"></div>
<div style="position:absolute;left:134.15px;width:128px;text-align:center;top:459.27px;font-size:12.8px;line-height:14.298px;color:#1a1a1a;font-weight:normal;white-space:nowrap;">5342</div>
<div style="position:absolute;left:261.90px;width:128px;text-align:center;top:450.37px;font-size:12.8px;line-height:14.298px;color:#1a1a1a;font-weight:normal;white-space:nowrap;">Mobile</div>
<div style="position:absolute;left:263.40px;width:128px;text-align:center;top:468.17px;font-size:12.8px;line-height:14.298px;color:#1a1a1a;font-weight:normal;white-space:nowrap;">User1__Friday</div>
<div style="position:absolute;left:428.50px;width:128px;text-align:center;top:459.27px;font-size:12.8px;line-height:14.298px;color:#1a1a1a;font-weight:normal;white-space:nowrap;">Mobile User1</div>
<div style="position:absolute;left:593.70px;width:128px;text-align:center;top:459.27px;font-size:12.8px;line-height:14.298px;color:#1a1a1a;font-weight:normal;white-space:nowrap;">09/01/2017 00:00:00</div>
<div style="position:absolute;left:722.73px;width:128px;text-align:center;top:459.27px;font-size:12.8px;line-height:14.298px;color:#1a1a1a;font-weight:normal;white-space:nowrap;">WEEKLY</div>
<div style="position:absolute;left:851.75px;width:128px;text-align:center;top:459.27px;font-size:12.8px;line-height:14.298px;color:#1a1a1a;font-weight:normal;white-space:nowrap;">0</div>
<div style="position:absolute;left:980.83px;width:128px;text-align:center;top:459.27px;font-size:12.8px;line-height:14.298px;color:#1a1a1a;font-weight:normal;white-space:nowrap;">FRIDAY</div>
<div style="position:absolute;left:1109.85px;width:128px;text-align:center;top:459.27px;font-size:12.8px;line-height:14.298px;color:#1a1a1a;font-weight:normal;white-space:nowrap;">69596</div>
<div style="position:absolute;left:1238.65px;width:128px;text-align:center;top:459.27px;font-size:12.8px;line-height:14.298px;color:#1a1a1a;font-weight:normal;white-space:nowrap;">727353</div>
<div style="position:absolute;left:1367.50px;width:128px;text-align:center;top:459.27px;font-size:12.8px;line-height:14.298px;color:#1a1a1a;font-weight:normal;white-space:nowrap;">Company14</div>
<div style="position:absolute;left:1496.50px;width:128px;text-align:center;top:459.27px;font-size:12.8px;line-height:14.298px;color:#1a1a1a;font-weight:normal;white-space:nowrap;">1144860</div>
<div style="position:absolute;left:1625.55px;width:128px;text-align:center;top:459.27px;font-size:12.8px;line-height:14.298px;color:#1a1a1a;font-weight:normal;white-space:nowrap;">5750 State Road 7</div>
<div style="position:absolute;left:134px;top:519px;width:1650px;height:2px;background:#000"></div>
<div style="position:absolute;left:134.15px;width:128px;text-align:center;top:494.77px;font-size:12.8px;line-height:14.298px;color:#1a1a1a;font-weight:normal;white-space:nowrap;">5342</div>
<div style="position:absolute;left:261.90px;width:128px;text-align:center;top:485.87px;font-size:12.8px;line-height:14.298px;color:#1a1a1a;font-weight:normal;white-space:nowrap;">Mobile</div>
<div style="position:absolute;left:263.40px;width:128px;text-align:center;top:503.67px;font-size:12.8px;line-height:14.298px;color:#1a1a1a;font-weight:normal;white-space:nowrap;">User1__Friday</div>
<div style="position:absolute;left:428.50px;width:128px;text-align:center;top:494.77px;font-size:12.8px;line-height:14.298px;color:#1a1a1a;font-weight:normal;white-space:nowrap;">Mobile User1</div>
<div style="position:absolute;left:593.70px;width:128px;text-align:center;top:494.77px;font-size:12.8px;line-height:14.298px;color:#1a1a1a;font-weight:normal;white-space:nowrap;">09/01/2017 00:00:00</div>
<div style="position:absolute;left:722.73px;width:128px;text-align:center;top:494.77px;font-size:12.8px;line-height:14.298px;color:#1a1a1a;font-weight:normal;white-space:nowrap;">WEEKLY</div>
<div style="position:absolute;left:851.75px;width:128px;text-align:center;top:494.77px;font-size:12.8px;line-height:14.298px;color:#1a1a1a;font-weight:normal;white-space:nowrap;">0</div>
<div style="position:absolute;left:980.83px;width:128px;text-align:center;top:494.77px;font-size:12.8px;line-height:14.298px;color:#1a1a1a;font-weight:normal;white-space:nowrap;">FRIDAY</div>
<div style="position:absolute;left:1109.85px;width:128px;text-align:center;top:494.77px;font-size:12.8px;line-height:14.298px;color:#1a1a1a;font-weight:normal;white-space:nowrap;">69594</div>
<div style="position:absolute;left:1238.65px;width:128px;text-align:center;top:494.77px;font-size:12.8px;line-height:14.298px;color:#1a1a1a;font-weight:normal;white-space:nowrap;">727341</div>
<div style="position:absolute;left:1367.50px;width:128px;text-align:center;top:494.77px;font-size:12.8px;line-height:14.298px;color:#1a1a1a;font-weight:normal;white-space:nowrap;">Company2</div>
<div style="position:absolute;left:1496.50px;width:128px;text-align:center;top:494.77px;font-size:12.8px;line-height:14.298px;color:#1a1a1a;font-weight:normal;white-space:nowrap;">1144848</div>
<div style="position:absolute;left:1625.05px;width:128px;text-align:center;top:485.87px;font-size:12.8px;line-height:14.298px;color:#1a1a1a;font-weight:normal;white-space:nowrap;">9400 West Palmetto</div>
<div style="position:absolute;left:1625.55px;width:128px;text-align:center;top:503.67px;font-size:12.8px;line-height:14.298px;color:#1a1a1a;font-weight:normal;white-space:nowrap;">Park Road</div>
<div style="position:absolute;left:134px;top:554px;width:1650px;height:2px;background:#000"></div>
<div style="position:absolute;left:134.15px;width:128px;text-align:center;top:530.27px;font-size:12.8px;line-height:14.298px;color:#1a1a1a;font-weight:normal;white-space:nowrap;">5342</div>
<div style="position:absolute;left:261.90px;width:128px;text-align:center;top:521.37px;font-size:12.8px;line-height:14.298px;color:#1a1a1a;font-weight:normal;white-space:nowrap;">Mobile</div>
<div style="position:absolute;left:263.40px;width:128px;text-align:center;top:539.17px;font-size:12.8px;line-height:14.298px;color:#1a1a1a;font-weight:normal;white-space:nowrap;">User1__Friday</div>
<div style="position:absolute;left:428.50px;width:128px;text-align:center;top:530.27px;font-size:12.8px;line-height:14.298px;color:#1a1a1a;font-weight:normal;white-space:nowrap;">Mobile User1</div>
<div style="position:absolute;left:593.70px;width:128px;text-align:center;top:530.27px;font-size:12.8px;line-height:14.298px;color:#1a1a1a;font-weight:normal;white-space:nowrap;">09/01/2017 00:00:00</div>
<div style="position:absolute;left:722.73px;width:128px;text-align:center;top:530.27px;font-size:12.8px;line-height:14.298px;color:#1a1a1a;font-weight:normal;white-space:nowrap;">WEEKLY</div>
<div style="position:absolute;left:851.75px;width:128px;text-align:center;top:530.27px;font-size:12.8px;line-height:14.298px;color:#1a1a1a;font-weight:normal;white-space:nowrap;">0</div>
<div style="position:absolute;left:980.83px;width:128px;text-align:center;top:530.27px;font-size:12.8px;line-height:14.298px;color:#1a1a1a;font-weight:normal;white-space:nowrap;">FRIDAY</div>
<div style="position:absolute;left:1109.85px;width:128px;text-align:center;top:530.27px;font-size:12.8px;line-height:14.298px;color:#1a1a1a;font-weight:normal;white-space:nowrap;">69597</div>
<div style="position:absolute;left:1238.65px;width:128px;text-align:center;top:530.27px;font-size:12.8px;line-height:14.298px;color:#1a1a1a;font-weight:normal;white-space:nowrap;">727340</div>
<div style="position:absolute;left:1367.50px;width:128px;text-align:center;top:530.27px;font-size:12.8px;line-height:14.298px;color:#1a1a1a;font-weight:normal;white-space:nowrap;">Company1</div>
<div style="position:absolute;left:1496.50px;width:128px;text-align:center;top:530.27px;font-size:12.8px;line-height:14.298px;color:#1a1a1a;font-weight:normal;white-space:nowrap;">1144847</div>
<div style="position:absolute;left:1625.55px;width:128px;text-align:center;top:530.27px;font-size:12.8px;line-height:14.298px;color:#1a1a1a;font-weight:normal;white-space:nowrap;">12811 Glades Road</div>
<div style="position:absolute;left:134px;top:590px;width:1650px;height:2px;background:#000"></div>
<div style="position:absolute;left:134.15px;width:128px;text-align:center;top:565.77px;font-size:12.8px;line-height:14.298px;color:#1a1a1a;font-weight:normal;white-space:nowrap;">5342</div>
<div style="position:absolute;left:261.90px;width:128px;text-align:center;top:556.87px;font-size:12.8px;line-height:14.298px;color:#1a1a1a;font-weight:normal;white-space:nowrap;">Mobile</div>
<div style="position:absolute;left:263.40px;width:128px;text-align:center;top:574.67px;font-size:12.8px;line-height:14.298px;color:#1a1a1a;font-weight:normal;white-space:nowrap;">User1__Friday</div>
<div style="position:absolute;left:428.50px;width:128px;text-align:center;top:565.77px;font-size:12.8px;line-height:14.298px;color:#1a1a1a;font-weight:normal;white-space:nowrap;">Mobile User1</div>
<div style="position:absolute;left:593.70px;width:128px;text-align:center;top:565.77px;font-size:12.8px;line-height:14.298px;color:#1a1a1a;font-weight:normal;white-space:nowrap;">09/01/2017 00:00:00</div>
<div style="position:absolute;left:722.73px;width:128px;text-align:center;top:565.77px;font-size:12.8px;line-height:14.298px;color:#1a1a1a;font-weight:normal;white-space:nowrap;">WEEKLY</div>
<div style="position:absolute;left:851.75px;width:128px;text-align:center;top:565.77px;font-size:12.8px;line-height:14.298px;color:#1a1a1a;font-weight:normal;white-space:nowrap;">0</div>
<div style="position:absolute;left:980.83px;width:128px;text-align:center;top:565.77px;font-size:12.8px;line-height:14.298px;color:#1a1a1a;font-weight:normal;white-space:nowrap;">FRIDAY</div>
<div style="position:absolute;left:1109.85px;width:128px;text-align:center;top:565.77px;font-size:12.8px;line-height:14.298px;color:#1a1a1a;font-weight:normal;white-space:nowrap;">69598</div>
<div style="position:absolute;left:1238.65px;width:128px;text-align:center;top:565.77px;font-size:12.8px;line-height:14.298px;color:#1a1a1a;font-weight:normal;white-space:nowrap;">727345</div>
<div style="position:absolute;left:1367.50px;width:128px;text-align:center;top:565.77px;font-size:12.8px;line-height:14.298px;color:#1a1a1a;font-weight:normal;white-space:nowrap;">Company6</div>
<div style="position:absolute;left:1496.50px;width:128px;text-align:center;top:565.77px;font-size:12.8px;line-height:14.298px;color:#1a1a1a;font-weight:normal;white-space:nowrap;">1144852</div>
<div style="position:absolute;left:1625.05px;width:128px;text-align:center;top:556.87px;font-size:12.8px;line-height:14.298px;color:#1a1a1a;font-weight:normal;white-space:nowrap;">10343 Stonebridge</div>
<div style="position:absolute;left:1625.55px;width:128px;text-align:center;top:574.67px;font-size:12.8px;line-height:14.298px;color:#1a1a1a;font-weight:normal;white-space:nowrap;">Boulevard</div>
<div style="position:absolute;left:134px;top:625px;width:1650px;height:2px;background:#000"></div>
<div style="position:absolute;left:134.15px;width:128px;text-align:center;top:601.27px;font-size:12.8px;line-height:14.298px;color:#1a1a1a;font-weight:normal;white-space:nowrap;">5342</div>
<div style="position:absolute;left:261.90px;width:128px;text-align:center;top:592.37px;font-size:12.8px;line-height:14.298px;color:#1a1a1a;font-weight:normal;white-space:nowrap;">Mobile</div>
<div style="position:absolute;left:263.40px;width:128px;text-align:center;top:610.17px;font-size:12.8px;line-height:14.298px;color:#1a1a1a;font-weight:normal;white-space:nowrap;">User1__Friday</div>
<div style="position:absolute;left:428.50px;width:128px;text-align:center;top:601.27px;font-size:12.8px;line-height:14.298px;color:#1a1a1a;font-weight:normal;white-space:nowrap;">Mobile User1</div>
<div style="position:absolute;left:593.70px;width:128px;text-align:center;top:601.27px;font-size:12.8px;line-height:14.298px;color:#1a1a1a;font-weight:normal;white-space:nowrap;">09/01/2017 00:00:00</div>
<div style="position:absolute;left:722.73px;width:128px;text-align:center;top:601.27px;font-size:12.8px;line-height:14.298px;color:#1a1a1a;font-weight:normal;white-space:nowrap;">WEEKLY</div>
<div style="position:absolute;left:851.75px;width:128px;text-align:center;top:601.27px;font-size:12.8px;line-height:14.298px;color:#1a1a1a;font-weight:normal;white-space:nowrap;">0</div>
<div style="position:absolute;left:980.83px;width:128px;text-align:center;top:601.27px;font-size:12.8px;line-height:14.298px;color:#1a1a1a;font-weight:normal;white-space:nowrap;">FRIDAY</div>
<div style="position:absolute;left:1109.85px;width:128px;text-align:center;top:601.27px;font-size:12.8px;line-height:14.298px;color:#1a1a1a;font-weight:normal;white-space:nowrap;">69593</div>
<div style="position:absolute;left:1238.65px;width:128px;text-align:center;top:601.27px;font-size:12.8px;line-height:14.298px;color:#1a1a1a;font-weight:normal;white-space:nowrap;">727352</div>
<div style="position:absolute;left:1367.50px;width:128px;text-align:center;top:601.27px;font-size:12.8px;line-height:14.298px;color:#1a1a1a;font-weight:normal;white-space:nowrap;">Company13</div>
<div style="position:absolute;left:1496.50px;width:128px;text-align:center;top:601.27px;font-size:12.8px;line-height:14.298px;color:#1a1a1a;font-weight:normal;white-space:nowrap;">1144859</div>
<div style="position:absolute;left:1625.05px;width:128px;text-align:center;top:592.37px;font-size:12.8px;line-height:14.298px;color:#1a1a1a;font-weight:normal;white-space:nowrap;">2499 North Federal</div>
<div style="position:absolute;left:1625.55px;width:128px;text-align:center;top:610.17px;font-size:12.8px;line-height:14.298px;color:#1a1a1a;font-weight:normal;white-space:nowrap;">Highway</div>
<div style="position:absolute;left:134px;top:661px;width:1650px;height:2px;background:#000"></div>
<div style="position:absolute;left:134.15px;width:128px;text-align:center;top:636.77px;font-size:12.8px;line-height:14.298px;color:#1a1a1a;font-weight:normal;white-space:nowrap;">5342</div>
<div style="position:absolute;left:261.90px;width:128px;text-align:center;top:627.87px;font-size:12.8px;line-height:14.298px;color:#1a1a1a;font-weight:normal;white-space:nowrap;">Mobile</div>
<div style="position:absolute;left:263.40px;width:128px;text-align:center;top:645.67px;font-size:12.8px;line-height:14.298px;color:#1a1a1a;font-weight:normal;white-space:nowrap;">User1__Friday</div>
<div style="position:absolute;left:428.50px;width:128px;text-align:center;top:636.77px;font-size:12.8px;line-height:14.298px;color:#1a1a1a;font-weight:normal;white-space:nowrap;">Mobile User1</div>
<div style="position:absolute;left:593.70px;width:128px;text-align:center;top:636.77px;font-size:12.8px;line-height:14.298px;color:#1a1a1a;font-weight:normal;white-space:nowrap;">09/01/2017 00:00:00</div>
<div style="position:absolute;left:722.73px;width:128px;text-align:center;top:636.77px;font-size:12.8px;line-height:14.298px;color:#1a1a1a;font-weight:normal;white-space:nowrap;">WEEKLY</div>
<div style="position:absolute;left:851.75px;width:128px;text-align:center;top:636.77px;font-size:12.8px;line-height:14.298px;color:#1a1a1a;font-weight:normal;white-space:nowrap;">0</div>
<div style="position:absolute;left:980.83px;width:128px;text-align:center;top:636.77px;font-size:12.8px;line-height:14.298px;color:#1a1a1a;font-weight:normal;white-space:nowrap;">FRIDAY</div>
<div style="position:absolute;left:1109.85px;width:128px;text-align:center;top:636.77px;font-size:12.8px;line-height:14.298px;color:#1a1a1a;font-weight:normal;white-space:nowrap;">69592</div>
<div style="position:absolute;left:1238.65px;width:128px;text-align:center;top:636.77px;font-size:12.8px;line-height:14.298px;color:#1a1a1a;font-weight:normal;white-space:nowrap;">727354</div>
<div style="position:absolute;left:1367.50px;width:128px;text-align:center;top:636.77px;font-size:12.8px;line-height:14.298px;color:#1a1a1a;font-weight:normal;white-space:nowrap;">Company15</div>
<div style="position:absolute;left:1496.50px;width:128px;text-align:center;top:636.77px;font-size:12.8px;line-height:14.298px;color:#1a1a1a;font-weight:normal;white-space:nowrap;">1144861</div>
<div style="position:absolute;left:1625.55px;width:128px;text-align:center;top:636.77px;font-size:12.8px;line-height:14.298px;color:#1a1a1a;font-weight:normal;white-space:nowrap;">1 Yamato Road</div>
<div style="position:absolute;left:134px;top:696px;width:1650px;height:2px;background:#000"></div>
<div style="position:absolute;left:134.15px;width:128px;text-align:center;top:672.27px;font-size:12.8px;line-height:14.298px;color:#1a1a1a;font-weight:normal;white-space:nowrap;">5342</div>
<div style="position:absolute;left:261.90px;width:128px;text-align:center;top:663.37px;font-size:12.8px;line-height:14.298px;color:#1a1a1a;font-weight:normal;white-space:nowrap;">Mobile</div>
<div style="position:absolute;left:263.40px;width:128px;text-align:center;top:681.17px;font-size:12.8px;line-height:14.298px;color:#1a1a1a;font-weight:normal;white-space:nowrap;">User1__Friday</div>
<div style="position:absolute;left:428.50px;width:128px;text-align:center;top:672.27px;font-size:12.8px;line-height:14.298px;color:#1a1a1a;font-weight:normal;white-space:nowrap;">Mobile User1</div>
<div style="position:absolute;left:593.70px;width:128px;text-align:center;top:672.27px;font-size:12.8px;line-height:14.298px;color:#1a1a1a;font-weight:normal;white-space:nowrap;">09/01/2017 00:00:00</div>
<div style="position:absolute;left:722.73px;width:128px;text-align:center;top:672.27px;font-size:12.8px;line-height:14.298px;color:#1a1a1a;font-weight:normal;white-space:nowrap;">WEEKLY</div>
<div style="position:absolute;left:851.75px;width:128px;text-align:center;top:672.27px;font-size:12.8px;line-height:14.298px;color:#1a1a1a;font-weight:normal;white-space:nowrap;">0</div>
<div style="position:absolute;left:980.83px;width:128px;text-align:center;top:672.27px;font-size:12.8px;line-height:14.298px;color:#1a1a1a;font-weight:normal;white-space:nowrap;">FRIDAY</div>
<div style="position:absolute;left:1109.85px;width:128px;text-align:center;top:672.27px;font-size:12.8px;line-height:14.298px;color:#1a1a1a;font-weight:normal;white-space:nowrap;">69591</div>
<div style="position:absolute;left:1238.65px;width:128px;text-align:center;top:672.27px;font-size:12.8px;line-height:14.298px;color:#1a1a1a;font-weight:normal;white-space:nowrap;">727346</div>
<div style="position:absolute;left:1367.50px;width:128px;text-align:center;top:672.27px;font-size:12.8px;line-height:14.298px;color:#1a1a1a;font-weight:normal;white-space:nowrap;">Company7</div>
<div style="position:absolute;left:1496.50px;width:128px;text-align:center;top:672.27px;font-size:12.8px;line-height:14.298px;color:#1a1a1a;font-weight:normal;white-space:nowrap;">1144853</div>
<div style="position:absolute;left:1625.05px;width:128px;text-align:center;top:663.37px;font-size:12.8px;line-height:14.298px;color:#1a1a1a;font-weight:normal;white-space:nowrap;">7680 North Federal</div>
<div style="position:absolute;left:1625.55px;width:128px;text-align:center;top:681.17px;font-size:12.8px;line-height:14.298px;color:#1a1a1a;font-weight:normal;white-space:nowrap;">Highway</div>
<div style="position:absolute;left:134px;top:732px;width:1650px;height:2px;background:#000"></div>
<div style="position:absolute;left:134.15px;width:128px;text-align:center;top:707.77px;font-size:12.8px;line-height:14.298px;color:#1a1a1a;font-weight:normal;white-space:nowrap;">5342</div>
<div style="position:absolute;left:261.90px;width:128px;text-align:center;top:698.87px;font-size:12.8px;line-height:14.298px;color:#1a1a1a;font-weight:normal;white-space:nowrap;">Mobile</div>
<div style="position:absolute;left:263.40px;width:128px;text-align:center;top:716.67px;font-size:12.8px;line-height:14.298px;color:#1a1a1a;font-weight:normal;white-space:nowrap;">User1__Friday</div>
<div style="position:absolute;left:428.50px;width:128px;text-align:center;top:707.77px;font-size:12.8px;line-height:14.298px;color:#1a1a1a;font-weight:normal;white-space:nowrap;">Mobile User1</div>
<div style="position:absolute;left:593.70px;width:128px;text-align:center;top:707.77px;font-size:12.8px;line-height:14.298px;color:#1a1a1a;font-weight:normal;white-space:nowrap;">09/01/2017 00:00:00</div>
<div style="position:absolute;left:722.73px;width:128px;text-align:center;top:707.77px;font-size:12.8px;line-height:14.298px;color:#1a1a1a;font-weight:normal;white-space:nowrap;">WEEKLY</div>
<div style="position:absolute;left:851.75px;width:128px;text-align:center;top:707.77px;font-size:12.8px;line-height:14.298px;color:#1a1a1a;font-weight:normal;white-space:nowrap;">0</div>
<div style="position:absolute;left:980.83px;width:128px;text-align:center;top:707.77px;font-size:12.8px;line-height:14.298px;color:#1a1a1a;font-weight:normal;white-space:nowrap;">FRIDAY</div>
<div style="position:absolute;left:1109.85px;width:128px;text-align:center;top:707.77px;font-size:12.8px;line-height:14.298px;color:#1a1a1a;font-weight:normal;white-space:nowrap;">69590</div>
<div style="position:absolute;left:1238.65px;width:128px;text-align:center;top:707.77px;font-size:12.8px;line-height:14.298px;color:#1a1a1a;font-weight:normal;white-space:nowrap;">727348</div>
<div style="position:absolute;left:1367.50px;width:128px;text-align:center;top:707.77px;font-size:12.8px;line-height:14.298px;color:#1a1a1a;font-weight:normal;white-space:nowrap;">Company9</div>
<div style="position:absolute;left:1496.50px;width:128px;text-align:center;top:707.77px;font-size:12.8px;line-height:14.298px;color:#1a1a1a;font-weight:normal;white-space:nowrap;">1144855</div>
<div style="position:absolute;left:1625.05px;width:128px;text-align:center;top:698.87px;font-size:12.8px;line-height:14.298px;color:#1a1a1a;font-weight:normal;white-space:nowrap;">1851 South Federal</div>
<div style="position:absolute;left:1625.55px;width:128px;text-align:center;top:716.67px;font-size:12.8px;line-height:14.298px;color:#1a1a1a;font-weight:normal;white-space:nowrap;">Highway</div>
<div style="position:absolute;left:134px;top:767px;width:1650px;height:2px;background:#000"></div>
<div style="position:absolute;left:134.15px;width:128px;text-align:center;top:743.27px;font-size:12.8px;line-height:14.298px;color:#1a1a1a;font-weight:normal;white-space:nowrap;">5342</div>
<div style="position:absolute;left:261.90px;width:128px;text-align:center;top:734.37px;font-size:12.8px;line-height:14.298px;color:#1a1a1a;font-weight:normal;white-space:nowrap;">Mobile</div>
<div style="position:absolute;left:263.40px;width:128px;text-align:center;top:752.17px;font-size:12.8px;line-height:14.298px;color:#1a1a1a;font-weight:normal;white-space:nowrap;">User1__Friday</div>
<div style="position:absolute;left:428.50px;width:128px;text-align:center;top:743.27px;font-size:12.8px;line-height:14.298px;color:#1a1a1a;font-weight:normal;white-space:nowrap;">Mobile User1</div>
<div style="position:absolute;left:593.70px;width:128px;text-align:center;top:743.27px;font-size:12.8px;line-height:14.298px;color:#1a1a1a;font-weight:normal;white-space:nowrap;">09/01/2017 00:00:00</div>
<div style="position:absolute;left:722.73px;width:128px;text-align:center;top:743.27px;font-size:12.8px;line-height:14.298px;color:#1a1a1a;font-weight:normal;white-space:nowrap;">WEEKLY</div>
<div style="position:absolute;left:851.75px;width:128px;text-align:center;top:743.27px;font-size:12.8px;line-height:14.298px;color:#1a1a1a;font-weight:normal;white-space:nowrap;">0</div>
<div style="position:absolute;left:980.83px;width:128px;text-align:center;top:743.27px;font-size:12.8px;line-height:14.298px;color:#1a1a1a;font-weight:normal;white-space:nowrap;">FRIDAY</div>
<div style="position:absolute;left:1109.85px;width:128px;text-align:center;top:743.27px;font-size:12.8px;line-height:14.298px;color:#1a1a1a;font-weight:normal;white-space:nowrap;">69604</div>
<div style="position:absolute;left:1238.65px;width:128px;text-align:center;top:743.27px;font-size:12.8px;line-height:14.298px;color:#1a1a1a;font-weight:normal;white-space:nowrap;">727347</div>
<div style="position:absolute;left:1367.50px;width:128px;text-align:center;top:743.27px;font-size:12.8px;line-height:14.298px;color:#1a1a1a;font-weight:normal;white-space:nowrap;">Company8</div>
<div style="position:absolute;left:1496.50px;width:128px;text-align:center;top:743.27px;font-size:12.8px;line-height:14.298px;color:#1a1a1a;font-weight:normal;white-space:nowrap;">1144854</div>
<div style="position:absolute;left:1625.05px;width:128px;text-align:center;top:734.37px;font-size:12.8px;line-height:14.298px;color:#1a1a1a;font-weight:normal;white-space:nowrap;">4771 West Atlantic</div>
<div style="position:absolute;left:1625.55px;width:128px;text-align:center;top:752.17px;font-size:12.8px;line-height:14.298px;color:#1a1a1a;font-weight:normal;white-space:nowrap;">Avenue</div>
<div style="position:absolute;left:134px;top:803px;width:1650px;height:2px;background:#000"></div>
<div style="position:absolute;left:134.15px;width:128px;text-align:center;top:778.77px;font-size:12.8px;line-height:14.298px;color:#1a1a1a;font-weight:normal;white-space:nowrap;">5342</div>
<div style="position:absolute;left:261.90px;width:128px;text-align:center;top:769.87px;font-size:12.8px;line-height:14.298px;color:#1a1a1a;font-weight:normal;white-space:nowrap;">Mobile</div>
<div style="position:absolute;left:263.40px;width:128px;text-align:center;top:787.67px;font-size:12.8px;line-height:14.298px;color:#1a1a1a;font-weight:normal;white-space:nowrap;">User1__Friday</div>
<div style="position:absolute;left:428.50px;width:128px;text-align:center;top:778.77px;font-size:12.8px;line-height:14.298px;color:#1a1a1a;font-weight:normal;white-space:nowrap;">Mobile User1</div>
<div style="position:absolute;left:593.70px;width:128px;text-align:center;top:778.77px;font-size:12.8px;line-height:14.298px;color:#1a1a1a;font-weight:normal;white-space:nowrap;">09/01/2017 00:00:00</div>
<div style="position:absolute;left:722.73px;width:128px;text-align:center;top:778.77px;font-size:12.8px;line-height:14.298px;color:#1a1a1a;font-weight:normal;white-space:nowrap;">WEEKLY</div>
<div style="position:absolute;left:851.75px;width:128px;text-align:center;top:778.77px;font-size:12.8px;line-height:14.298px;color:#1a1a1a;font-weight:normal;white-space:nowrap;">0</div>
<div style="position:absolute;left:980.83px;width:128px;text-align:center;top:778.77px;font-size:12.8px;line-height:14.298px;color:#1a1a1a;font-weight:normal;white-space:nowrap;">FRIDAY</div>
<div style="position:absolute;left:1109.85px;width:128px;text-align:center;top:778.77px;font-size:12.8px;line-height:14.298px;color:#1a1a1a;font-weight:normal;white-space:nowrap;">69599</div>
<div style="position:absolute;left:1238.65px;width:128px;text-align:center;top:778.77px;font-size:12.8px;line-height:14.298px;color:#1a1a1a;font-weight:normal;white-space:nowrap;">727343</div>
<div style="position:absolute;left:1367.50px;width:128px;text-align:center;top:778.77px;font-size:12.8px;line-height:14.298px;color:#1a1a1a;font-weight:normal;white-space:nowrap;">Company4</div>
<div style="position:absolute;left:1496.50px;width:128px;text-align:center;top:778.77px;font-size:12.8px;line-height:14.298px;color:#1a1a1a;font-weight:normal;white-space:nowrap;">1144850</div>
<div style="position:absolute;left:1625.05px;width:128px;text-align:center;top:769.87px;font-size:12.8px;line-height:14.298px;color:#1a1a1a;font-weight:normal;white-space:nowrap;">11600 Valencia</div>
<div style="position:absolute;left:1625.55px;width:128px;text-align:center;top:787.67px;font-size:12.8px;line-height:14.298px;color:#1a1a1a;font-weight:normal;white-space:nowrap;">Lakes Boulevard</div>
<div style="position:absolute;left:134px;top:838px;width:1650px;height:2px;background:#000"></div>
<div style="position:absolute;left:134.15px;width:128px;text-align:center;top:814.27px;font-size:12.8px;line-height:14.298px;color:#1a1a1a;font-weight:normal;white-space:nowrap;">5342</div>
<div style="position:absolute;left:261.90px;width:128px;text-align:center;top:805.37px;font-size:12.8px;line-height:14.298px;color:#1a1a1a;font-weight:normal;white-space:nowrap;">Mobile</div>
<div style="position:absolute;left:263.40px;width:128px;text-align:center;top:823.17px;font-size:12.8px;line-height:14.298px;color:#1a1a1a;font-weight:normal;white-space:nowrap;">User1__Friday</div>
<div style="position:absolute;left:428.50px;width:128px;text-align:center;top:814.27px;font-size:12.8px;line-height:14.298px;color:#1a1a1a;font-weight:normal;white-space:nowrap;">Mobile User1</div>
<div style="position:absolute;left:593.70px;width:128px;text-align:center;top:814.27px;font-size:12.8px;line-height:14.298px;color:#1a1a1a;font-weight:normal;white-space:nowrap;">09/01/2017 00:00:00</div>
<div style="position:absolute;left:722.73px;width:128px;text-align:center;top:814.27px;font-size:12.8px;line-height:14.298px;color:#1a1a1a;font-weight:normal;white-space:nowrap;">WEEKLY</div>
<div style="position:absolute;left:851.75px;width:128px;text-align:center;top:814.27px;font-size:12.8px;line-height:14.298px;color:#1a1a1a;font-weight:normal;white-space:nowrap;">0</div>
<div style="position:absolute;left:980.83px;width:128px;text-align:center;top:814.27px;font-size:12.8px;line-height:14.298px;color:#1a1a1a;font-weight:normal;white-space:nowrap;">FRIDAY</div>
<div style="position:absolute;left:1109.85px;width:128px;text-align:center;top:814.27px;font-size:12.8px;line-height:14.298px;color:#1a1a1a;font-weight:normal;white-space:nowrap;">69600</div>
<div style="position:absolute;left:1238.65px;width:128px;text-align:center;top:814.27px;font-size:12.8px;line-height:14.298px;color:#1a1a1a;font-weight:normal;white-space:nowrap;">727351</div>
<div style="position:absolute;left:1367.50px;width:128px;text-align:center;top:814.27px;font-size:12.8px;line-height:14.298px;color:#1a1a1a;font-weight:normal;white-space:nowrap;">Company12</div>
<div style="position:absolute;left:1496.50px;width:128px;text-align:center;top:814.27px;font-size:12.8px;line-height:14.298px;color:#1a1a1a;font-weight:normal;white-space:nowrap;">1144858</div>
<div style="position:absolute;left:1625.55px;width:128px;text-align:center;top:814.27px;font-size:12.8px;line-height:14.298px;color:#1a1a1a;font-weight:normal;white-space:nowrap;">8898 Lyons Road</div>
<div style="position:absolute;left:134px;top:874px;width:1650px;height:2px;background:#000"></div>
<div style="position:absolute;left:134.15px;width:128px;text-align:center;top:849.77px;font-size:12.8px;line-height:14.298px;color:#1a1a1a;font-weight:normal;white-space:nowrap;">5342</div>
<div style="position:absolute;left:261.90px;width:128px;text-align:center;top:840.87px;font-size:12.8px;line-height:14.298px;color:#1a1a1a;font-weight:normal;white-space:nowrap;">Mobile</div>
<div style="position:absolute;left:263.40px;width:128px;text-align:center;top:858.67px;font-size:12.8px;line-height:14.298px;color:#1a1a1a;font-weight:normal;white-space:nowrap;">User1__Friday</div>
<div style="position:absolute;left:428.50px;width:128px;text-align:center;top:849.77px;font-size:12.8px;line-height:14.298px;color:#1a1a1a;font-weight:normal;white-space:nowrap;">Mobile User1</div>
<div style="position:absolute;left:593.70px;width:128px;text-align:center;top:849.77px;font-size:12.8px;line-height:14.298px;color:#1a1a1a;font-weight:normal;white-space:nowrap;">09/01/2017 00:00:00</div>
<div style="position:absolute;left:722.73px;width:128px;text-align:center;top:849.77px;font-size:12.8px;line-height:14.298px;color:#1a1a1a;font-weight:normal;white-space:nowrap;">WEEKLY</div>
<div style="position:absolute;left:851.75px;width:128px;text-align:center;top:849.77px;font-size:12.8px;line-height:14.298px;color:#1a1a1a;font-weight:normal;white-space:nowrap;">0</div>
<div style="position:absolute;left:980.83px;width:128px;text-align:center;top:849.77px;font-size:12.8px;line-height:14.298px;color:#1a1a1a;font-weight:normal;white-space:nowrap;">FRIDAY</div>
<div style="position:absolute;left:1109.85px;width:128px;text-align:center;top:849.77px;font-size:12.8px;line-height:14.298px;color:#1a1a1a;font-weight:normal;white-space:nowrap;">69603</div>
<div style="position:absolute;left:1238.65px;width:128px;text-align:center;top:849.77px;font-size:12.8px;line-height:14.298px;color:#1a1a1a;font-weight:normal;white-space:nowrap;">727350</div>
<div style="position:absolute;left:1367.50px;width:128px;text-align:center;top:849.77px;font-size:12.8px;line-height:14.298px;color:#1a1a1a;font-weight:normal;white-space:nowrap;">Company11</div>
<div style="position:absolute;left:1496.50px;width:128px;text-align:center;top:849.77px;font-size:12.8px;line-height:14.298px;color:#1a1a1a;font-weight:normal;white-space:nowrap;">1144857</div>
<div style="position:absolute;left:1625.05px;width:128px;text-align:center;top:840.87px;font-size:12.8px;line-height:14.298px;color:#1a1a1a;font-weight:normal;white-space:nowrap;">8500 Tourmaline</div>
<div style="position:absolute;left:1625.55px;width:128px;text-align:center;top:858.67px;font-size:12.8px;line-height:14.298px;color:#1a1a1a;font-weight:normal;white-space:nowrap;">Boulevard</div>
<div style="position:absolute;left:134px;top:909px;width:1650px;height:2px;background:#000"></div>
<div style="position:absolute;left:134.15px;width:128px;text-align:center;top:885.27px;font-size:12.8px;line-height:14.298px;color:#1a1a1a;font-weight:normal;white-space:nowrap;">5342</div>
<div style="position:absolute;left:261.90px;width:128px;text-align:center;top:876.37px;font-size:12.8px;line-height:14.298px;color:#1a1a1a;font-weight:normal;white-space:nowrap;">Mobile</div>
<div style="position:absolute;left:263.40px;width:128px;text-align:center;top:894.17px;font-size:12.8px;line-height:14.298px;color:#1a1a1a;font-weight:normal;white-space:nowrap;">User1__Friday</div>
<div style="position:absolute;left:428.50px;width:128px;text-align:center;top:885.27px;font-size:12.8px;line-height:14.298px;color:#1a1a1a;font-weight:normal;white-space:nowrap;">Mobile User1</div>
<div style="position:absolute;left:593.70px;width:128px;text-align:center;top:885.27px;font-size:12.8px;line-height:14.298px;color:#1a1a1a;font-weight:normal;white-space:nowrap;">09/01/2017 00:00:00</div>
<div style="position:absolute;left:722.73px;width:128px;text-align:center;top:885.27px;font-size:12.8px;line-height:14.298px;color:#1a1a1a;font-weight:normal;white-space:nowrap;">WEEKLY</div>
<div style="position:absolute;left:851.75px;width:128px;text-align:center;top:885.27px;font-size:12.8px;line-height:14.298px;color:#1a1a1a;font-weight:normal;white-space:nowrap;">0</div>
<div style="position:absolute;left:980.83px;width:128px;text-align:center;top:885.27px;font-size:12.8px;line-height:14.298px;color:#1a1a1a;font-weight:normal;white-space:nowrap;">FRIDAY</div>
<div style="position:absolute;left:1109.85px;width:128px;text-align:center;top:885.27px;font-size:12.8px;line-height:14.298px;color:#1a1a1a;font-weight:normal;white-space:nowrap;">69602</div>
<div style="position:absolute;left:1238.65px;width:128px;text-align:center;top:885.27px;font-size:12.8px;line-height:14.298px;color:#1a1a1a;font-weight:normal;white-space:nowrap;">727344</div>
<div style="position:absolute;left:1367.50px;width:128px;text-align:center;top:885.27px;font-size:12.8px;line-height:14.298px;color:#1a1a1a;font-weight:normal;white-space:nowrap;">Company5</div>
<div style="position:absolute;left:1496.50px;width:128px;text-align:center;top:885.27px;font-size:12.8px;line-height:14.298px;color:#1a1a1a;font-weight:normal;white-space:nowrap;">1144851</div>
<div style="position:absolute;left:1625.55px;width:128px;text-align:center;top:885.27px;font-size:12.8px;line-height:14.298px;color:#1a1a1a;font-weight:normal;white-space:nowrap;">4511 Lantana Road</div>
<div style="position:absolute;left:134px;top:945px;width:1650px;height:2px;background:#000"></div>
<div style="position:absolute;left:134.15px;width:128px;text-align:center;top:920.77px;font-size:12.8px;line-height:14.298px;color:#1a1a1a;font-weight:normal;white-space:nowrap;">5342</div>
<div style="position:absolute;left:261.90px;width:128px;text-align:center;top:911.87px;font-size:12.8px;line-height:14.298px;color:#1a1a1a;font-weight:normal;white-space:nowrap;">Mobile</div>
<div style="position:absolute;left:263.40px;width:128px;text-align:center;top:929.67px;font-size:12.8px;line-height:14.298px;color:#1a1a1a;font-weight:normal;white-space:nowrap;">User1__Friday</div>
<div style="position:absolute;left:428.50px;width:128px;text-align:center;top:920.77px;font-size:12.8px;line-height:14.298px;color:#1a1a1a;font-weight:normal;white-space:nowrap;">Mobile User1</div>
<div style="position:absolute;left:593.70px;width:128px;text-align:center;top:920.77px;font-size:12.8px;line-height:14.298px;color:#1a1a1a;font-weight:normal;white-space:nowrap;">09/01/2017 00:00:00</div>
<div style="position:absolute;left:722.73px;width:128px;text-align:center;top:920.77px;font-size:12.8px;line-height:14.298px;color:#1a1a1a;font-weight:normal;white-space:nowrap;">WEEKLY</div>
<div style="position:absolute;left:851.75px;width:128px;text-align:center;top:920.77px;font-size:12.8px;line-height:14.298px;color:#1a1a1a;font-weight:normal;white-space:nowrap;">0</div>
<div style="position:absolute;left:980.83px;width:128px;text-align:center;top:920.77px;font-size:12.8px;line-height:14.298px;color:#1a1a1a;font-weight:normal;white-space:nowrap;">FRIDAY</div>
<div style="position:absolute;left:1109.85px;width:128px;text-align:center;top:920.77px;font-size:12.8px;line-height:14.298px;color:#1a1a1a;font-weight:normal;white-space:nowrap;">69601</div>
<div style="position:absolute;left:1238.65px;width:128px;text-align:center;top:920.77px;font-size:12.8px;line-height:14.298px;color:#1a1a1a;font-weight:normal;white-space:nowrap;">727342</div>
<div style="position:absolute;left:1367.50px;width:128px;text-align:center;top:920.77px;font-size:12.8px;line-height:14.298px;color:#1a1a1a;font-weight:normal;white-space:nowrap;">Company3</div>
<div style="position:absolute;left:1496.50px;width:128px;text-align:center;top:920.77px;font-size:12.8px;line-height:14.298px;color:#1a1a1a;font-weight:normal;white-space:nowrap;">1144849</div>
<div style="position:absolute;left:1625.05px;width:128px;text-align:center;top:911.87px;font-size:12.8px;line-height:14.298px;color:#1a1a1a;font-weight:normal;white-space:nowrap;">5801 Lake Worth</div>
<div style="position:absolute;left:1625.55px;width:128px;text-align:center;top:929.67px;font-size:12.8px;line-height:14.298px;color:#1a1a1a;font-weight:normal;white-space:nowrap;">Road</div>
<div style="position:absolute;left:134.15px;width:128px;text-align:center;top:956.27px;font-size:12.8px;line-height:14.298px;color:#1a1a1a;font-weight:normal;white-space:nowrap;">5344</div>
<div style="position:absolute;left:261.90px;width:128px;text-align:center;top:947.37px;font-size:12.8px;line-height:14.298px;color:#1a1a1a;font-weight:normal;white-space:nowrap;">Mobile</div>
<div style="position:absolute;left:263.40px;width:128px;text-align:center;top:965.17px;font-size:12.8px;line-height:14.298px;color:#1a1a1a;font-weight:normal;white-space:nowrap;">User1__Friday</div>
<div style="position:absolute;left:428.50px;width:128px;text-align:center;top:956.27px;font-size:12.8px;line-height:14.298px;color:#1a1a1a;font-weight:normal;white-space:nowrap;">Mobile User1</div>
<div style="position:absolute;left:593.70px;width:128px;text-align:center;top:956.27px;font-size:12.8px;line-height:14.298px;color:#1a1a1a;font-weight:normal;white-space:nowrap;">11/06/2017 00:00:00</div>
<div style="position:absolute;left:722.73px;width:128px;text-align:center;top:956.27px;font-size:12.8px;line-height:14.298px;color:#1a1a1a;font-weight:normal;white-space:nowrap;">WEEKLY</div>
<div style="position:absolute;left:851.75px;width:128px;text-align:center;top:956.27px;font-size:12.8px;line-height:14.298px;color:#1a1a1a;font-weight:normal;white-space:nowrap;">0</div>
<div style="position:absolute;left:980.83px;width:128px;text-align:center;top:956.27px;font-size:12.8px;line-height:14.298px;color:#1a1a1a;font-weight:normal;white-space:nowrap;">MONDAY</div>
<div style="position:absolute;left:1109.85px;width:128px;text-align:center;top:956.27px;font-size:12.8px;line-height:14.298px;color:#1a1a1a;font-weight:normal;white-space:nowrap;">69613</div>
<div style="position:absolute;left:1238.65px;width:128px;text-align:center;top:956.27px;font-size:12.8px;line-height:14.298px;color:#1a1a1a;font-weight:normal;white-space:nowrap;">727352</div>
<div style="position:absolute;left:1367.50px;width:128px;text-align:center;top:956.27px;font-size:12.8px;line-height:14.298px;color:#1a1a1a;font-weight:normal;white-space:nowrap;">Company13</div>
<div style="position:absolute;left:1496.50px;width:128px;text-align:center;top:956.27px;font-size:12.8px;line-height:14.298px;color:#1a1a1a;font-weight:normal;white-space:nowrap;">1144859</div>
<div style="position:absolute;left:1625.05px;width:128px;text-align:center;top:947.37px;font-size:12.8px;line-height:14.298px;color:#1a1a1a;font-weight:normal;white-space:nowrap;">2499 North Federal</div>
<div style="position:absolute;left:1625.55px;width:128px;text-align:center;top:965.17px;font-size:12.8px;line-height:14.298px;color:#1a1a1a;font-weight:normal;white-space:nowrap;">Highway</div>
<div style="position:absolute;left:131.3px;top:288px;width:133.4px;height:33.3px;border:3px solid #227447"></div>
<div style="position:absolute;left:258px;top:315.5px;width:8px;height:8px;background:#227447;border:1px solid #fff"></div>
<div style="position:absolute;left:96px;top:967px;width:1688px;height:25px;background:#f6f6f6"></div>
<div style="position:absolute;left:99px;top:974px;width:1705px;height:14.5px;background:#bcbcbc;border-radius:7px"></div>
<div style="position:absolute;left:96px;top:991px;width:1688px;height:1px;background:#dedede"></div>
<div style="position:absolute;left:96px;top:992px;width:1688px;height:42px;background:#ececec"></div>
<svg style="position:absolute;left:119px;top:1006px;" width="13" height="17" viewBox="0 0 13 17"><path d="M12.5 0.5V16.5L0.5 8.5Z" fill="#8f8f8f"/></svg>
<svg style="position:absolute;left:156px;top:1006px;" width="13" height="17" viewBox="0 0 13 17"><path d="M0.5 0.5V16.5L12.5 8.5Z" fill="#8f8f8f"/></svg>
<div style="position:absolute;left:194px;top:991px;width:116px;height:36.5px;background:#fff;border-radius:0 0 5px 5px;box-shadow:0 1.5px 1.5px rgba(0,0,0,0.28)"></div>
<div style="position:absolute;left:192.30px;width:120px;text-align:center;top:1001.41px;font-size:19.1px;line-height:21.335px;color:#35925e;font-weight:bold;white-space:nowrap;">Routes</div>
<div style="position:absolute;left:334px;top:1011.5px;width:17px;height:3px;background:#585858"></div>
<div style="position:absolute;left:341px;top:1004.5px;width:3px;height:17px;background:#585858"></div>
<div style="position:absolute;left:372px;top:994px;width:1px;height:32px;background:#d2d2d2"></div>
<div style="position:absolute;left:96px;top:1034px;width:1688px;height:37px;background:#217346;border-radius:0 0 0 8px"></div>
<div style="position:absolute;left:135px;top:1041.92px;font-size:19.2px;line-height:21.446px;color:#e6efe9;font-weight:normal;white-space:nowrap;">Ready</div>
<div style="position:absolute;left:209px;top:1071px;width:1316px;height:2.5px;background:#2e2e2e"></div>
<div style="position:absolute;left:1525px;top:1071px;width:259px;height:2.5px;background:#8a8a8a"></div>
<div style="position:absolute;left:96px;top:1071px;width:113px;height:2px;background:#9a9a9a"></div>
<div style="position:absolute;left:1784px;top:0px;width:136px;height:1080px;background:#fff"></div>
</body></html>
